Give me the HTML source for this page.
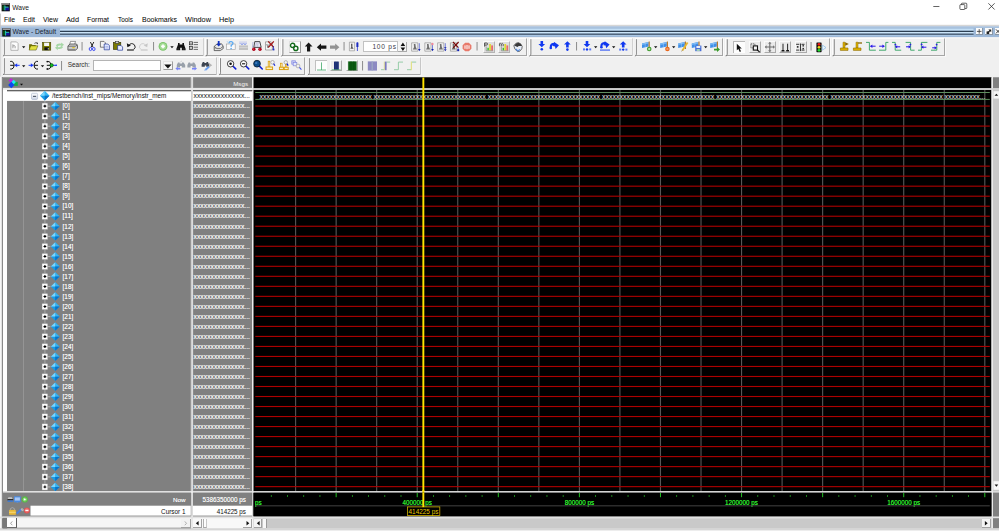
<!DOCTYPE html>
<html><head><meta charset="utf-8"><title>Wave</title>
<style>
html,body{margin:0;padding:0;background:#fff;}
body{width:999px;height:531px;position:relative;overflow:hidden;font-family:"Liberation Sans",sans-serif;}
#r{position:absolute;left:0;top:0;width:999px;height:531px;overflow:hidden;}
#r div,#r span,#r svg{position:absolute;}
#r span{white-space:nowrap;line-height:12px;}
#r span.s{text-shadow:0 0 0.4px currentColor;}
#r span.m{font-family:"Liberation Mono",monospace;}
#r svg{overflow:visible;}
</style></head><body><div id="r">
<div style="left:0px;top:0px;width:999px;height:531px;background:#fff;"></div>
<svg style="left:1px;top:3px;" width="10" height="10"><g transform="translate(0.600,0.000)"><rect x="0" y="0" width="8.200" height="8.300" fill="#0c0c0c"/><rect x="0.400" y="0.300" width="7.400" height="1.300" fill="#c4c4c4"/><rect x="0.900" y="2.400" width="2" height="4.800" fill="#0a5a1a"/><rect x="3.600" y="4.400" width="3.800" height="3" fill="#14149a"/><path d="M3.300 2.400v5M3.300 4.100h3.600" stroke="#2ce0d0" stroke-width="0.900" fill="none"/></g></svg>
<span style="left:12.30px;top:1.60px;font-size:6.67px;color:#1a1a1a;">Wave</span>
<svg style="left:930px;top:0px;" width="70" height="15"><path d="M3.300 6.500h6.100" stroke="#222" stroke-width="0.700"/><rect x="29.900" y="4.600" width="4.900" height="4.900" rx="0.800" fill="none" stroke="#222" stroke-width="0.700"/><path d="M31.400 4.600v-0.600q0-0.800 0.800-0.800h3.800q0.800 0 0.800 0.800v3.800q0 0.800-0.800 0.800h-1.200" fill="none" stroke="#222" stroke-width="0.700"/><path d="M58.400 3.300l6.200 6.200M64.600 3.300l-6.200 6.200" stroke="#222" stroke-width="0.750"/></svg>
<span style="left:4.00px;top:13.60px;font-size:6.83px;color:#000;">File</span>
<span style="left:23.00px;top:13.60px;font-size:6.96px;color:#000;">Edit</span>
<span style="left:43.00px;top:13.60px;font-size:6.98px;color:#000;">View</span>
<span style="left:66.00px;top:13.60px;font-size:7.31px;color:#000;">Add</span>
<span style="left:87.00px;top:13.60px;font-size:6.95px;color:#000;">Format</span>
<span style="left:118.00px;top:13.60px;font-size:6.43px;color:#000;">Tools</span>
<span style="left:142.00px;top:13.60px;font-size:7.00px;color:#000;">Bookmarks</span>
<span style="left:185.00px;top:13.60px;font-size:7.31px;color:#000;">Window</span>
<span style="left:219.00px;top:13.60px;font-size:7.29px;color:#000;">Help</span>
<svg style="left:0px;top:24px" width="999" height="3"><rect x="0.000" y="0.800" width="999.000" height="1.800" fill="#d6d6d6"/></svg>
<svg style="left:0px;top:26px" width="999" height="12"><rect x="0.000" y="0.500" width="999.000" height="11.000" fill="#9db8d8"/></svg>
<svg style="left:0px;top:26px" width="999" height="2"><rect x="0.000" y="0.500" width="999.000" height="1.200" fill="#adc6e2"/></svg>
<svg style="left:0px;top:13px" width="1" height="519"><rect x="0.000" y="0.500" width="0.800" height="518.000" fill="#c4c4c4"/></svg>
<svg style="left:60px;top:26px;" width="915" height="12"><rect x="0" y="2.6" width="913.500" height="2.2" fill="#c4dff5"/><rect x="0" y="4.8" width="913.500" height="1.15" fill="#1e3044"/><rect x="0" y="5.95" width="913.500" height="1.7" fill="#cbe4f8"/><rect x="0" y="7.65" width="913.500" height="1.15" fill="#1e3044"/><rect x="0" y="8.8" width="913.500" height="0.7" fill="#b8d4ee"/></svg>
<svg style="left:2px;top:28px;" width="10" height="10"><g transform="translate(0.300,0.200)"><rect x="0" y="0" width="8.200" height="8.300" fill="#0c0c0c"/><rect x="0.400" y="0.300" width="7.400" height="1.300" fill="#c4c4c4"/><rect x="0.900" y="2.400" width="2" height="4.800" fill="#0a5a1a"/><rect x="3.600" y="4.400" width="3.800" height="3" fill="#14149a"/><path d="M3.300 2.400v5M3.300 4.100h3.600" stroke="#2ce0d0" stroke-width="0.900" fill="none"/></g></svg>
<span style="left:12.50px;top:26.20px;font-size:6.62px;color:#15202e;">Wave - Default</span>
<div style="left:975.8px;top:27.8px;width:7.4px;height:7.6px;background:#fbfbfb;border-right:0.8px solid #8a98a8;border-bottom:0.8px solid #8a98a8;box-sizing:border-box"></div>
<div style="left:985.4px;top:27.8px;width:7.4px;height:7.6px;background:#fbfbfb;border-right:0.8px solid #8a98a8;border-bottom:0.8px solid #8a98a8;box-sizing:border-box"></div>
<div style="left:994.8px;top:27.8px;width:7.4px;height:7.6px;background:#fbfbfb;border-right:0.8px solid #8a98a8;border-bottom:0.8px solid #8a98a8;box-sizing:border-box"></div>
<svg style="left:975px;top:27px;" width="25" height="9"><g transform="translate(0.800,0.800)"><path d="M3.400 1.300v4.600M1.100 3.600h4.600" stroke="#333" stroke-width="0.800"/><path d="M11.400 5.600l3.200-3.200" stroke="#222" stroke-width="1.200"/><path d="M12.600 1.600h2.800v2.800z" fill="#222"/><rect x="10.800" y="3.600" width="2.600" height="2.600" fill="#222"/><path d="M20.200 1.600l4 4M24.200 1.600l-4 4" stroke="#222" stroke-width="0.900"/></g></svg>
<svg style="left:0px;top:37px" width="999" height="41"><rect x="0.000" y="0.500" width="999.000" height="40.000" fill="#f0f0f0"/></svg>
<svg style="left:0px;top:37px" width="999" height="2"><rect x="0.000" y="0.500" width="999.000" height="0.800" fill="#fafafa"/></svg>
<svg style="left:0px;top:37px" width="2" height="41"><rect x="0.000" y="0.500" width="1.200" height="40.000" fill="#dadada"/></svg>
<div style="left:2.5px;top:38.2px;width:201.0px;height:18.099999999999994px;box-sizing:border-box;border-right:0.8px solid #a6a6a6;border-bottom:0.8px solid #a6a6a6;border-top:0.6px solid #fcfcfc;border-left:0.6px solid #fcfcfc"></div>
<svg style="left:2px;top:56px" width="203" height="2"><rect x="0.500" y="0.300" width="202.200" height="0.800" fill="#fbfbfb"/></svg>
<svg style="left:203px;top:38px" width="2" height="19"><rect x="0.500" y="0.200" width="0.900" height="18.100" fill="#fbfbfb"/></svg>
<svg style="left:2px;top:38px;" width="5" height="20"><g transform="translate(0.500,0.200)"><path d="M1.9 1v14.9q0 1.4 -1.5 2.2" fill="none" stroke="#6e6e6e" stroke-width="0.8"/></g></svg>
<div style="left:205.4px;top:38.2px;width:73.6px;height:18.099999999999994px;box-sizing:border-box;border-right:0.8px solid #a6a6a6;border-bottom:0.8px solid #a6a6a6;border-top:0.6px solid #fcfcfc;border-left:0.6px solid #fcfcfc"></div>
<svg style="left:205px;top:56px" width="76" height="2"><rect x="0.400" y="0.300" width="74.800" height="0.800" fill="#fbfbfb"/></svg>
<svg style="left:279px;top:38px" width="1" height="19"><rect x="0.000" y="0.200" width="0.900" height="18.100" fill="#fbfbfb"/></svg>
<svg style="left:205px;top:38px;" width="5" height="20"><g transform="translate(0.400,0.200)"><path d="M1.9 1v14.9q0 1.4 -1.5 2.2" fill="none" stroke="#6e6e6e" stroke-width="0.8"/></g></svg>
<div style="left:281px;top:38.2px;width:246px;height:18.099999999999994px;box-sizing:border-box;border-right:0.8px solid #a6a6a6;border-bottom:0.8px solid #a6a6a6;border-top:0.6px solid #fcfcfc;border-left:0.6px solid #fcfcfc"></div>
<svg style="left:281px;top:56px" width="248" height="2"><rect x="0.000" y="0.300" width="247.200" height="0.800" fill="#fbfbfb"/></svg>
<svg style="left:527px;top:38px" width="1" height="19"><rect x="0.000" y="0.200" width="0.900" height="18.100" fill="#fbfbfb"/></svg>
<svg style="left:281px;top:38px;" width="5" height="20"><g transform="translate(0.000,0.200)"><path d="M1.9 1v14.9q0 1.4 -1.5 2.2" fill="none" stroke="#6e6e6e" stroke-width="0.8"/></g></svg>
<div style="left:529px;top:38.2px;width:103.5px;height:18.099999999999994px;box-sizing:border-box;border-right:0.8px solid #a6a6a6;border-bottom:0.8px solid #a6a6a6;border-top:0.6px solid #fcfcfc;border-left:0.6px solid #fcfcfc"></div>
<svg style="left:529px;top:56px" width="105" height="2"><rect x="0.000" y="0.300" width="104.700" height="0.800" fill="#fbfbfb"/></svg>
<svg style="left:632px;top:38px" width="2" height="19"><rect x="0.500" y="0.200" width="0.900" height="18.100" fill="#fbfbfb"/></svg>
<svg style="left:529px;top:38px;" width="5" height="20"><g transform="translate(0.000,0.200)"><path d="M1.9 1v14.9q0 1.4 -1.5 2.2" fill="none" stroke="#6e6e6e" stroke-width="0.8"/></g></svg>
<div style="left:634.5px;top:38.2px;width:88.5px;height:18.099999999999994px;box-sizing:border-box;border-right:0.8px solid #a6a6a6;border-bottom:0.8px solid #a6a6a6;border-top:0.6px solid #fcfcfc;border-left:0.6px solid #fcfcfc"></div>
<svg style="left:634px;top:56px" width="91" height="2"><rect x="0.500" y="0.300" width="89.700" height="0.800" fill="#fbfbfb"/></svg>
<svg style="left:723px;top:38px" width="1" height="19"><rect x="0.000" y="0.200" width="0.900" height="18.100" fill="#fbfbfb"/></svg>
<svg style="left:634px;top:38px;" width="5" height="20"><g transform="translate(0.500,0.200)"><path d="M1.9 1v14.9q0 1.4 -1.5 2.2" fill="none" stroke="#6e6e6e" stroke-width="0.8"/></g></svg>
<div style="left:725.4px;top:38.2px;width:104.60000000000002px;height:18.099999999999994px;box-sizing:border-box;border-right:0.8px solid #a6a6a6;border-bottom:0.8px solid #a6a6a6;border-top:0.6px solid #fcfcfc;border-left:0.6px solid #fcfcfc"></div>
<svg style="left:725px;top:56px" width="107" height="2"><rect x="0.400" y="0.300" width="105.800" height="0.800" fill="#fbfbfb"/></svg>
<svg style="left:830px;top:38px" width="1" height="19"><rect x="0.000" y="0.200" width="0.900" height="18.100" fill="#fbfbfb"/></svg>
<svg style="left:725px;top:38px;" width="5" height="20"><g transform="translate(0.400,0.200)"><path d="M1.9 1v14.9q0 1.4 -1.5 2.2" fill="none" stroke="#6e6e6e" stroke-width="0.8"/></g></svg>
<div style="left:832.4px;top:38.2px;width:112.60000000000002px;height:18.099999999999994px;box-sizing:border-box;border-right:0.8px solid #a6a6a6;border-bottom:0.8px solid #a6a6a6;border-top:0.6px solid #fcfcfc;border-left:0.6px solid #fcfcfc"></div>
<svg style="left:832px;top:56px" width="115" height="2"><rect x="0.400" y="0.300" width="113.800" height="0.800" fill="#fbfbfb"/></svg>
<svg style="left:945px;top:38px" width="1" height="19"><rect x="0.000" y="0.200" width="0.900" height="18.100" fill="#fbfbfb"/></svg>
<svg style="left:832px;top:38px;" width="5" height="20"><g transform="translate(0.400,0.200)"><path d="M1.9 1v14.9q0 1.4 -1.5 2.2" fill="none" stroke="#6e6e6e" stroke-width="0.8"/></g></svg>
<div style="left:2.5px;top:57.2px;width:214.1px;height:17.799999999999997px;box-sizing:border-box;border-right:0.8px solid #a6a6a6;border-bottom:0.8px solid #a6a6a6;border-top:0.6px solid #fcfcfc;border-left:0.6px solid #fcfcfc"></div>
<svg style="left:2px;top:75px" width="216" height="1"><rect x="0.500" y="0.000" width="215.300" height="0.800" fill="#fbfbfb"/></svg>
<svg style="left:216px;top:57px" width="2" height="18"><rect x="0.600" y="0.200" width="0.900" height="17.800" fill="#fbfbfb"/></svg>
<svg style="left:2px;top:57px;" width="5" height="19"><g transform="translate(0.500,0.200)"><path d="M1.9 1v14.6q0 1.4 -1.5 2.2" fill="none" stroke="#6e6e6e" stroke-width="0.8"/></g></svg>
<div style="left:218.6px;top:57.2px;width:86.9px;height:17.799999999999997px;box-sizing:border-box;border-right:0.8px solid #a6a6a6;border-bottom:0.8px solid #a6a6a6;border-top:0.6px solid #fcfcfc;border-left:0.6px solid #fcfcfc"></div>
<svg style="left:218px;top:75px" width="89" height="1"><rect x="0.600" y="0.000" width="88.100" height="0.800" fill="#fbfbfb"/></svg>
<svg style="left:305px;top:57px" width="2" height="18"><rect x="0.500" y="0.200" width="0.900" height="17.800" fill="#fbfbfb"/></svg>
<svg style="left:218px;top:57px;" width="5" height="19"><g transform="translate(0.600,0.200)"><path d="M1.9 1v14.6q0 1.4 -1.5 2.2" fill="none" stroke="#6e6e6e" stroke-width="0.8"/></g></svg>
<div style="left:307.5px;top:57.2px;width:113.10000000000002px;height:17.799999999999997px;box-sizing:border-box;border-right:0.8px solid #a6a6a6;border-bottom:0.8px solid #a6a6a6;border-top:0.6px solid #fcfcfc;border-left:0.6px solid #fcfcfc"></div>
<svg style="left:307px;top:75px" width="115" height="1"><rect x="0.500" y="0.000" width="114.300" height="0.800" fill="#fbfbfb"/></svg>
<svg style="left:420px;top:57px" width="2" height="18"><rect x="0.600" y="0.200" width="0.900" height="17.800" fill="#fbfbfb"/></svg>
<svg style="left:307px;top:57px;" width="5" height="19"><g transform="translate(0.500,0.200)"><path d="M1.9 1v14.6q0 1.4 -1.5 2.2" fill="none" stroke="#6e6e6e" stroke-width="0.8"/></g></svg>
<svg style="left:81px;top:42px" width="2" height="9"><rect x="0.550" y="0.000" width="1.000" height="8.500" fill="#8c8c8c"/></svg>
<svg style="left:153px;top:42px" width="2" height="9"><rect x="0.050" y="0.000" width="1.000" height="8.500" fill="#8c8c8c"/></svg>
<svg style="left:343px;top:42px" width="2" height="9"><rect x="0.550" y="0.000" width="1.000" height="8.500" fill="#8c8c8c"/></svg>
<svg style="left:476px;top:42px" width="2" height="9"><rect x="0.550" y="0.000" width="1.000" height="8.500" fill="#8c8c8c"/></svg>
<svg style="left:576px;top:42px" width="2" height="9"><rect x="0.050" y="0.000" width="1.000" height="8.500" fill="#8c8c8c"/></svg>
<svg style="left:810px;top:42px" width="2" height="9"><rect x="0.550" y="0.000" width="1.000" height="8.500" fill="#8c8c8c"/></svg>
<svg style="left:61px;top:61px" width="2" height="10"><rect x="0.050" y="0.000" width="1.000" height="9.500" fill="#8c8c8c"/></svg>
<svg style="left:362px;top:61px" width="2" height="10"><rect x="0.050" y="0.000" width="1.000" height="9.500" fill="#8c8c8c"/></svg>
<svg style="left:22px;top:46px;" width="5" height="3"><g transform="translate(0.000,0.200)"><path d="M0 0h3.4L1.7 2z" fill="#111"/></g></svg>
<svg style="left:170px;top:46px;" width="5" height="3"><g transform="translate(0.300,0.200)"><path d="M0 0h3.4L1.7 2z" fill="#111"/></g></svg>
<svg style="left:594px;top:46px;" width="5" height="3"><g transform="translate(0.000,0.200)"><path d="M0 0h3.4L1.7 2z" fill="#111"/></g></svg>
<svg style="left:612px;top:46px;" width="5" height="3"><g transform="translate(0.000,0.200)"><path d="M0 0h3.4L1.7 2z" fill="#111"/></g></svg>
<svg style="left:654px;top:46px;" width="5" height="3"><g transform="translate(0.000,0.200)"><path d="M0 0h3.4L1.7 2z" fill="#111"/></g></svg>
<svg style="left:672px;top:46px;" width="5" height="3"><g transform="translate(0.000,0.200)"><path d="M0 0h3.4L1.7 2z" fill="#111"/></g></svg>
<svg style="left:704px;top:46px;" width="5" height="3"><g transform="translate(0.000,0.200)"><path d="M0 0h3.4L1.7 2z" fill="#111"/></g></svg>
<svg style="left:22px;top:65px;" width="5" height="3"><g transform="translate(0.000,0.200)"><path d="M0 0h3.4L1.7 2z" fill="#111"/></g></svg>
<svg style="left:40px;top:65px;" width="5" height="3"><g transform="translate(0.800,0.200)"><path d="M0 0h3.4L1.7 2z" fill="#111"/></g></svg>
<svg style="left:10px;top:41px;" width="13" height="13"><g transform="translate(0.500,0.500)"><path d="M0.4 0.4h5.6l1.6 1.6v6.8h-7.2z" fill="#fdfdfd" stroke="#9a9a9a" stroke-width="0.7"/><path d="M2.4 6.8v-4M2.4 4.6q1.6-1.2 2.2 0v2.2" fill="none" stroke="#8a8a8a" stroke-width="0.8"/></g></svg>
<svg style="left:28px;top:42px;" width="13" height="13"><g transform="translate(0.800,0.000)"><path d="M0.3 8V2.2h2.6l0.8 0.9h3.2V8z" fill="#6a6a00"/><path d="M0.3 8.1l1.6-4.3h7.2L7.3 8.1z" fill="#e0e040" stroke="#4a4a00" stroke-width="0.5"/><path d="M5.6 1.4q1.6-1.4 3 0" fill="none" stroke="#222" stroke-width="0.7"/><path d="M7.7 0.6l1.4 0.2-0.4 1.6z" fill="#111"/></g></svg>
<svg style="left:42px;top:42px;" width="13" height="13"><g transform="translate(0.200,0.100)"><rect x="0.2" y="0.2" width="8.4" height="7.9" fill="#7a7a00" stroke="#3c3c00" stroke-width="0.5"/><rect x="1.9" y="0.6" width="5" height="3.3" fill="#f4f4f4"/><rect x="2.2" y="5.2" width="4.6" height="2.8" fill="#111"/><rect x="5.6" y="5.9" width="0.9" height="1.6" fill="#ddd"/></g></svg>
<svg style="left:54px;top:42px;" width="13" height="13"><g transform="translate(0.800,0.000)"><path d="M1 3.6q1.4-2.6 5.4-1.8V0.4l2.8 2.4-2.8 2.2V3.6q-2.6-0.6-3.6 0.9z" fill="#a6d6a6"/><path d="M8.4 5q-1.4 2.6-5.4 1.8v1.4L0.2 5.8 3 3.6v1.4q2.6 0.6 3.6-0.9z" fill="#a6d6a6"/></g></svg>
<svg style="left:67px;top:41px;" width="13" height="13"><g transform="translate(0.500,0.000)"><path d="M3 0.4h5l-1 3.4H2z" fill="#fff" stroke="#555" stroke-width="0.6"/><path d="M0.4 5l2-2h6.6l1 1.6v2.8l-2 1.8H0.4z" fill="#cfcfcf" stroke="#333" stroke-width="0.7"/><path d="M0.6 5.2h7.4l1.8-1.2" fill="none" stroke="#333" stroke-width="0.6"/><rect x="4.8" y="6.2" width="2.4" height="1" fill="#e0c000"/><path d="M1 8.4h7" stroke="#666" stroke-width="0.6"/></g></svg>
<svg style="left:88px;top:41px;" width="13" height="13"><g transform="translate(0.800,0.800)"><path d="M1.6 0.2l2.6 5.2M5 0.2L2.4 5.4" stroke="#111" stroke-width="0.9" fill="none"/><ellipse cx="1.7" cy="7.2" rx="1.3" ry="1.6" fill="none" stroke="#3040f0" stroke-width="0.9"/><ellipse cx="5" cy="7.2" rx="1.3" ry="1.6" fill="none" stroke="#3040f0" stroke-width="0.9"/></g></svg>
<svg style="left:100px;top:41px;" width="13" height="13"><path d="M0.4 0.4h3.6l1.4 1.4v4.4h-5z" fill="#f4f4f4" stroke="#333" stroke-width="0.6"/><path d="M4.2 3h3.6l1.6 1.6v4.2H4.2z" fill="#dfe6ff" stroke="#223a9a" stroke-width="0.7"/><path d="M5.4 5.6h2.6M5.4 7h2.6" stroke="#7a8ad0" stroke-width="0.5"/></svg>
<svg style="left:113px;top:41px;" width="13" height="13"><rect x="0.4" y="1.4" width="7.4" height="7" fill="#7a7a00" stroke="#2c2c00" stroke-width="0.6"/><rect x="2.4" y="0.4" width="3.4" height="2" fill="#d0d0d0" stroke="#222" stroke-width="0.5"/><path d="M4.6 4.4h3.4l1.6 1.6v3.2h-5z" fill="#e8ecff" stroke="#223a9a" stroke-width="0.7"/></svg>
<svg style="left:126px;top:42px;" width="13" height="13"><g transform="translate(0.400,0.000)"><path d="M2.2 3.6q2.6-3.6 5.8-0.8q2 2.6-0.6 4.6" fill="none" stroke="#111" stroke-width="0.9"/><path d="M0.4 1.2l0.6 4 3.4-1.8z" fill="#111"/><path d="M0.6 8h6.8" stroke="#111" stroke-width="1.1"/></g></svg>
<svg style="left:139px;top:42px;" width="13" height="13"><path d="M7 3.6q-2.6-3.6-5.8-0.8q-2 2.6 0.6 4.6" fill="none" stroke="#c6c6c6" stroke-width="0.8"/><path d="M8.8 1.2l-0.6 4-3.4-1.8z" fill="#c6c6c6"/><path d="M1.8 8h6.8" stroke="#bdbdbd" stroke-width="1"/></svg>
<svg style="left:158px;top:41px;" width="13" height="13"><g transform="translate(0.400,0.900)"><circle cx="4.6" cy="4.5" r="4.4" fill="#7cc46c"/><circle cx="4.6" cy="4.5" r="3.3" fill="#a4dc94"/><path d="M4.6 2.6v3.8M2.7 4.5h3.8" stroke="#fff" stroke-width="1.7"/></g></svg>
<svg style="left:176px;top:41px;" width="13" height="13"><g transform="translate(0.000,0.800)"><path d="M2 1.2h1.6v1.4h2.8V1.2H8v1.6l1.6 4.2v1.4H5.8V6h-1.6v2.4H0.4V7L2 2.8z" fill="#111"/><path d="M1.4 7.2h1.6M7 7.2h1.6" stroke="#555" stroke-width="0.6"/></g></svg>
<svg style="left:189px;top:41px;" width="13" height="13"><g transform="translate(0.000,0.200)"><rect x="0.5" y="0.6" width="3" height="3" fill="#eee" stroke="#222" stroke-width="0.7"/><rect x="0.5" y="5.4" width="3" height="3" fill="#eee" stroke="#222" stroke-width="0.7"/><path d="M1.3 2.1h1.4M1.3 6.9h1.4" stroke="#222" stroke-width="0.6"/><path d="M4.6 1.2h4.4M4.6 3.4h4.4M4.6 6h4.4M4.6 8.2h4.4" stroke="#333" stroke-width="0.7"/></g></svg>
<svg style="left:213px;top:40px;" width="13" height="13"><g transform="translate(0.800,0.800)"><path d="M0.4 5.6l3-2.6h4.4l1.6 2.4v2.4l-3 2H0.4z" fill="#e6e6e6" stroke="#333" stroke-width="0.7"/><path d="M0.6 5.8l2.6 2h3.4l2.6-2.2" fill="none" stroke="#333" stroke-width="0.6"/><path d="M0.6 7.6h5.6" stroke="#777" stroke-width="0.5"/><path d="M4 0.2h1.8v3h1.4L4.9 5.8 2.6 3.2H4z" fill="#1030c0"/></g></svg>
<svg style="left:226px;top:41px;" width="13" height="13"><rect x="0.6" y="3" width="8.6" height="5.6" fill="#fafafa" stroke="#9a9a9a" stroke-width="0.6"/><path d="M2.8 2.4q0.4-2 2.4-1.8q2.2 0.4 1.6 2.2q-0.4 1-1.6 1.6v1.4" fill="none" stroke="#58a8f0" stroke-width="1.3"/><circle cx="5.1" cy="7.6" r="0.8" fill="#58a8f0"/><path d="M0.8 0.6l1.2 0.6M2.8 0.2l0.8 0.6" stroke="#6ab0f0" stroke-width="0.5"/></svg>
<svg style="left:238px;top:41px;" width="13" height="13"><g transform="translate(0.800,0.000)"><rect x="0.2" y="4.4" width="9" height="4.6" fill="#c2c2c2"/><path d="M0.4 6.4h8.6" stroke="#e4e4e4" stroke-width="0.6"/><path d="M1.2 0.6v3M3.2 0.6v3M5.2 0.6v3M7.2 0.6v3" stroke="#8090e8" stroke-width="0.8" stroke-dasharray="1 0.6"/><path d="M2.2 2.6l1 1.2 1-1.2M5.2 2.6l1 1.2 1-1.2" stroke="#4060e0" stroke-width="0.6" fill="none"/></g></svg>
<svg style="left:251px;top:41px;" width="13" height="13"><g transform="translate(0.800,0.000)"><path d="M3 0.6h5l1.4 5.8H2z" fill="#e8e8f4" stroke="#222" stroke-width="0.8"/><path d="M1.2 1l-0.6 6" stroke="#9aa0d0" stroke-width="0.7"/><path d="M4.6 1.6l-0.8 4.2M6.2 1.6l-0.4 4.2" stroke="#a8a8c8" stroke-width="0.6"/><circle cx="2" cy="8.2" r="1.7" fill="#b00018"/><circle cx="8.2" cy="8.2" r="1.7" fill="#b00018"/><circle cx="1.7" cy="7.9" r="0.5" fill="#f06070"/><circle cx="7.9" cy="7.9" r="0.5" fill="#f06070"/></g></svg>
<svg style="left:265px;top:41px;" width="13" height="13"><path d="M0.5 0.8h5.6l1.2 1.2v7H0.5z" fill="#f4f4f4" stroke="#777" stroke-width="0.6"/><path d="M1.8 3l1.2 4 1.4-4" stroke="#666" stroke-width="0.8" fill="none"/><path d="M3.2 0.4l5.6 6M8.8 0.4L3.4 6.4" stroke="#a01010" stroke-width="1.2"/><path d="M8.4 5v3.6" stroke="#2030c0" stroke-width="0.8"/><rect x="7.6" y="7.6" width="1.8" height="1.8" fill="#2030c0"/></svg>
<div style="left:288.8px;top:41.2px;width:12px;height:11.6px;background:#fcfcfc;box-sizing:border-box;border-right:1px solid #9a9a9a;border-bottom:1px solid #9a9a9a;border-top:0.5px solid #e0e0e0;border-left:0.5px solid #e0e0e0"></div>
<svg style="left:289px;top:42px;" width="13" height="13"><g transform="translate(0.600,0.400)"><circle cx="3" cy="3" r="2.1" fill="none" stroke="#146a1c" stroke-width="1.4"/><circle cx="6.2" cy="6" r="2.1" fill="none" stroke="#146a1c" stroke-width="1.4"/></g></svg>
<svg style="left:304px;top:42px;" width="13" height="13"><g transform="translate(0.800,0.400)"><path d="M3.8 0L7.7 4.2H5.4V9.2H2.2V4.2H0z" fill="#161616"/></g></svg>
<svg style="left:316px;top:43px;" width="13" height="13"><g transform="translate(0.800,0.600)"><path d="M0 3.6L4.2 0v2h5.4v3.2H4.2v2z" fill="#161616"/></g></svg>
<svg style="left:330px;top:43px;" width="13" height="13"><g transform="translate(0.000,0.600)"><path d="M9.4 3.6L5.2 0v2H0v3.2h5.2v2z" fill="#929292"/></g></svg>
<svg style="left:349px;top:41px;" width="13" height="13"><g transform="translate(0.000,0.600)"><path d="M0.4 0.6h5.2v8.6H0.4z" fill="#f2f2f2" stroke="#8a8a8a" stroke-width="0.6"/><path d="M2 2.2h1.4v3.2l1.2 1.8H1.4l0.8-1.8z" fill="#555"/><path d="M8.400 0.600v8.800" stroke="#2030d0" stroke-width="0.800"/><path d="M7.400 1h2v4.400h-2z" fill="#1c2cc0"/></g></svg>
<div style="left:363.4px;top:41.4px;width:34.2px;height:10.8px;background:#fff;box-sizing:border-box;border:0.6px solid #c2c2c2"></div>
<span style="left:372.400px;top:40.900px;font-size:6.600px;letter-spacing:0.780px;color:#3a3a48">100 ps</span>
<div style="left:398.4px;top:41.8px;width:8.6px;height:10.6px;background:#f6f6f6;box-sizing:border-box;border-right:0.9px solid #aaa;border-bottom:0.9px solid #aaa"></div>
<svg style="left:398px;top:41px;" width="10" height="12"><g transform="translate(0.400,0.800)"><path d="M2.200 4.200h4.600L4.500 0.800zM2.200 5.800h4.600L4.500 9.200z" fill="#111"/><path d="M1.400 5h6.200" stroke="#ccc" stroke-width="0.400"/></g></svg>
<svg style="left:411px;top:42px;" width="13" height="13"><g transform="translate(0.200,0.400)"><path d="M0.4 0.4h6.2v8.4H0.4z" fill="#f0f0f0" stroke="#8a8a8a" stroke-width="0.6"/><path d="M2.6 1.6h1.6l0.4 3 1.2 2.4H1.6l1.2-2.2z" fill="#6e6e6e"/><path d="M8.1 0.8v6.4" stroke="#4050d0" stroke-width="0.7"/><path d="M6.8 6.6h2.6L8.1 8.9z" fill="#1020b0"/></g></svg>
<svg style="left:424px;top:42px;" width="13" height="13"><g transform="translate(0.400,0.400)"><path d="M0.4 0.4h6.2v8.4H0.4z" fill="#f0f0f0" stroke="#8a8a8a" stroke-width="0.6"/><path d="M2.6 1.6h1.6l0.4 3 1.2 2.4H1.6l1.2-2.2z" fill="#6e6e6e"/><path d="M8.1 2.6v4.4" stroke="#4050d0" stroke-width="0.7"/><path d="M6.8 6.6h2.6L8.1 8.9z" fill="#1020b0"/><circle cx="8" cy="1.6" r="1.2" fill="#f08a9a"/></g></svg>
<svg style="left:437px;top:42px;" width="13" height="13"><g transform="translate(0.200,0.400)"><path d="M0.4 0.4h6.2v8.4H0.4z" fill="#f0f0f0" stroke="#8a8a8a" stroke-width="0.6"/><path d="M2.6 1.6h1.6l0.4 3 1.2 2.4H1.6l1.2-2.2z" fill="#6e6e6e"/><path d="M8.1 0.8v5" stroke="#4050d0" stroke-width="0.7"/><path d="M6.8 4.8h2.6L8.1 6.6zM6.8 6.8h2.6L8.1 8.9z" fill="#1020b0"/></g></svg>
<svg style="left:450px;top:42px;" width="13" height="13"><g transform="translate(0.000,0.400)"><path d="M0.4 0.4h6.2v8.4H0.4z" fill="#f0f0f0" stroke="#8a8a8a" stroke-width="0.6"/><path d="M2.6 1.6h1.6l0.4 3 1.2 2.4H1.6l1.2-2.2z" fill="#6e6e6e"/><path d="M3 -0.4l5.4 5.6M8.6 -0.4L3.2 5.4" stroke="#7a0a0a" stroke-width="1.2"/><path d="M8.2 5v2.4" stroke="#4050d0" stroke-width="0.7"/><rect x="7.2" y="6.8" width="2" height="2" fill="#1020b0"/></g></svg>
<svg style="left:462px;top:42px;" width="13" height="13"><g transform="translate(0.600,0.800)"><path d="M2.6 0h3.6l2.6 2.5v3.4L6.2 8.4H2.6L0 5.9V2.5z" fill="#e8796a"/><path d="M2.4 2.6v3.4M4.4 2.2v4.2M6.4 2.6v3.4" stroke="#fff" stroke-width="1"/></g></svg>
<div style="left:482.6px;top:41.2px;width:12px;height:11.8px;background:#dedede;box-sizing:border-box;border-right:1.2px solid #b4b4b4;border-bottom:1.2px solid #b4b4b4;border-top:0.5px solid #fafafa;border-left:0.5px solid #fafafa"></div>
<svg style="left:482px;top:41px;" width="13" height="13"><g transform="translate(0.600,0.200)"><path d="M2 5.4V1.8h1.8q1.4 0.2 1.2 1.2q-0.2 0.9-1.4 0.9H2" fill="none" stroke="#444" stroke-width="0.9"/><rect x="4.8" y="6.6" width="1.4" height="2.6" fill="#30c030"/><rect x="6.6" y="2.8" width="1.7" height="6.6" fill="#e0d830"/><rect x="8.6" y="4.2" width="1.8" height="5.2" fill="#e86a6a"/><path d="M3.6 5.2v4.4h7" stroke="#7a7a7a" stroke-width="0.6" fill="none"/></g></svg>
<div style="left:497.8px;top:41.2px;width:12px;height:11.8px;background:#dedede;box-sizing:border-box;border-right:1.2px solid #b4b4b4;border-bottom:1.2px solid #b4b4b4;border-top:0.5px solid #fafafa;border-left:0.5px solid #fafafa"></div>
<svg style="left:497px;top:41px;" width="13" height="13"><g transform="translate(0.800,0.200)"><path d="M1.6 5V2.2M1.6 2.9q1.4-1.4 1.9 0V5M3.5 2.9q1.4-1.4 1.9 0V5" fill="none" stroke="#444" stroke-width="0.8"/><rect x="4.8" y="6.6" width="1.4" height="2.6" fill="#30c030"/><rect x="6.6" y="2.8" width="1.7" height="6.6" fill="#e0d830"/><rect x="8.6" y="4.2" width="1.8" height="5.2" fill="#e86a6a"/><path d="M3.6 5.2v4.4h7" stroke="#7a7a7a" stroke-width="0.6" fill="none"/></g></svg>
<svg style="left:512px;top:42px;" width="13" height="13"><g transform="translate(0.800,0.400)"><path d="M1 3.4l2-2.4 2.4-0.8 2.4 1.2 1.6 2.6-0.4 2.4-2 2.4-2.2 0.4-2.6-2.4z" fill="#e8eef8" stroke="#333" stroke-width="0.7"/><path d="M1.4 3.2l2-2.2 2.2-0.6 2.2 1 1.4 2.2H6l-1.4 1z" fill="#3a3a3a"/><path d="M3 6.6l2 2 2.2-1.4" stroke="#5a90e0" stroke-width="1.2" fill="none"/></g></svg>
<svg style="left:538px;top:41px;" width="13" height="13"><g transform="translate(0.400,0.000)"><path d="M2.1 0h2.6v3h2L3.4 6.2 0 3h2.1z" fill="#1038f0"/><circle cx="3.4" cy="8.3" r="1.3" fill="#1038f0"/></g></svg>
<svg style="left:549px;top:42px;" width="13" height="13"><g transform="translate(0.000,0.200)"><path d="M1.800 5.200q-0.200-3.800 4-3.600" fill="none" stroke="#1038f0" stroke-width="2.200"/><path d="M5.200 -0.200l4.800 3.200-3.400 3.800-0.600-2.600-2.200-0.400z" fill="#1038f0"/><circle cx="1.800" cy="5.800" r="1.300" fill="#1038f0"/></g></svg>
<svg style="left:564px;top:41px;" width="13" height="13"><g transform="translate(0.000,0.200)"><path d="M2.1 6.2h2.6v-3h2L3.4 0 0 3.2h2.1z" fill="#1038f0"/><circle cx="3.4" cy="8.4" r="1.3" fill="#1038f0"/></g></svg>
<svg style="left:582px;top:41px;" width="13" height="13"><g transform="translate(0.600,0.000)"><path d="M3.1 0h2.6v3h2L4.4 6.2 1 3h2.1z" fill="#1038f0"/><circle cx="4.4" cy="8.4" r="1.2" fill="#1038f0"/><rect x="0.4" y="7.4" width="2" height="2" fill="#5a78f4"/><rect x="6.6" y="7.4" width="2" height="2" fill="#5a78f4"/></g></svg>
<svg style="left:599px;top:41px;" width="13" height="13"><g transform="translate(0.400,0.400)"><path d="M2 5.200q-0.200-3.800 4-3.600" fill="none" stroke="#1038f0" stroke-width="2.200"/><path d="M5.400 -0.200l4.800 3.200-3.400 3.800-0.600-2.600-2.200-0.400z" fill="#1038f0"/><circle cx="2" cy="5.800" r="1.300" fill="#1038f0"/><rect x="0.600" y="8" width="10" height="1.400" fill="#5a78f4"/></g></svg>
<svg style="left:618px;top:41px;" width="13" height="13"><g transform="translate(0.600,0.200)"><path d="M3.3 6.2h2.6v-3h2L4.6 0 1.2 3.2h2.1z" fill="#1038f0"/><circle cx="4.6" cy="8.4" r="1.2" fill="#1038f0"/><rect x="0.6" y="7.4" width="2" height="2" fill="#5a78f4"/><rect x="6.8" y="7.4" width="2" height="2" fill="#5a78f4"/></g></svg>
<svg style="left:641px;top:41px;" width="13" height="13"><g transform="translate(0.800,0.200)"><path d="M0.2 2.2l6.6-1.4v4.4L0.2 6.8z" fill="#3f8fe8"/><path d="M0.2 2.2l6.6-1.4v1.4L0.2 3.8z" fill="#7ab8f4"/><path d="M3.4 1.4v4.8" stroke="#a8d0f8" stroke-width="0.5"/><path d="M7.4 0.2v7.6" stroke="#b87a30" stroke-width="1.2"/><circle cx="7.4" cy="7.8" r="2.3" fill="#3e9a2c"/><path d="M7.4 6.6v2.4M6.2 7.8h2.4" stroke="#e8ffe0" stroke-width="0.8"/></g></svg>
<svg style="left:660px;top:41px;" width="13" height="13"><g transform="translate(0.000,0.200)"><path d="M0.2 2.2l6.6-1.4v4.4L0.2 6.8z" fill="#3f8fe8"/><path d="M0.2 2.2l6.6-1.4v1.4L0.2 3.8z" fill="#7ab8f4"/><path d="M3.4 1.4v4.8" stroke="#a8d0f8" stroke-width="0.5"/><path d="M7.4 0.2v7.6" stroke="#b87a30" stroke-width="1.2"/><circle cx="7.4" cy="7.8" r="2.3" fill="#e8661c"/><path d="M6.4 7.8h2" stroke="#ffe8d8" stroke-width="0.8"/></g></svg>
<svg style="left:678px;top:41px;" width="13" height="13"><g transform="translate(0.000,0.200)"><path d="M0.2 2.2l6.6-1.4v4.4L0.2 6.8z" fill="#3f8fe8"/><path d="M0.2 2.2l6.6-1.4v1.4L0.2 3.8z" fill="#7ab8f4"/><path d="M3.4 1.4v4.8" stroke="#a8d0f8" stroke-width="0.5"/><path d="M7.4 0.2v7.6" stroke="#b87a30" stroke-width="1.2"/><path d="M9.6 1.2L4.4 9.2" stroke="#e8b830" stroke-width="1.8"/><path d="M4.4 9.2l-0.8 0.6" stroke="#7a5a20" stroke-width="1"/></g></svg>
<svg style="left:691px;top:41px;" width="13" height="13"><g transform="translate(0.600,0.200)"><path d="M0.2 2.2l6.6-1.4v4.4L0.2 6.8z" fill="#3f8fe8"/><path d="M0.2 2.2l6.6-1.4v1.4L0.2 3.8z" fill="#7ab8f4"/><path d="M3.4 1.4v4.8" stroke="#a8d0f8" stroke-width="0.5"/><path d="M7.4 0.2v7.6" stroke="#b87a30" stroke-width="1.2"/><rect x="3.6" y="4.4" width="6.2" height="5.6" fill="#4a70d8"/><rect x="4.8" y="4.8" width="3.8" height="2" fill="#e8eefc"/><rect x="5" y="8" width="3.2" height="1.6" fill="#b8e8b0"/></g></svg>
<svg style="left:710px;top:41px;" width="13" height="13"><g transform="translate(0.000,0.200)"><path d="M0.2 2.2l6.6-1.4v4.4L0.2 6.8z" fill="#3f8fe8"/><path d="M0.2 2.2l6.6-1.4v1.4L0.2 3.8z" fill="#7ab8f4"/><path d="M3.4 1.4v4.8" stroke="#a8d0f8" stroke-width="0.5"/><path d="M7.4 0.2v7.6" stroke="#b87a30" stroke-width="1.2"/><path d="M4 7.6h3V5.8l3 2.6-3 2.4V9.2H4z" fill="#3a9a2c"/></g></svg>
<div style="left:733.2px;top:41.1px;width:12px;height:12px;background:#fdfdfd;box-sizing:border-box;border-left:0.8px solid #b8b8b8;border-top:0.8px solid #b8b8b8"></div>
<svg style="left:733px;top:41px;" width="13" height="13"><g transform="translate(0.200,0.100)"><path d="M3.6 2.6v6.6l1.6-1.4 1.4 3 1.2-0.6-1.4-2.8h2.2z" fill="#111"/></g></svg>
<div style="left:748.5px;top:41.1px;width:12px;height:12px;background:#eaeaea;box-sizing:border-box;border-right:1.2px solid #aaaaaa;border-bottom:1.2px solid #aaaaaa;border-top:0.5px solid #fafafa;border-left:0.5px solid #fafafa"></div>
<svg style="left:748px;top:41px;" width="13" height="13"><g transform="translate(0.500,0.100)"><rect x="2.4" y="2.8" width="4" height="4" fill="none" stroke="#333" stroke-width="0.7" stroke-dasharray="1.2 0.7"/><rect x="4.8" y="4.8" width="4.2" height="4.2" fill="#f4f4f4" stroke="#111" stroke-width="1.1"/><path d="M8.6 8.6l2.6 2.4" stroke="#111" stroke-width="1.2"/></g></svg>
<div style="left:764px;top:41.1px;width:12px;height:12px;background:#eaeaea;box-sizing:border-box;border-right:1.2px solid #aaaaaa;border-bottom:1.2px solid #aaaaaa;border-top:0.5px solid #fafafa;border-left:0.5px solid #fafafa"></div>
<svg style="left:764px;top:41px;" width="13" height="13"><g transform="translate(0.000,0.100)"><path d="M5.8 1.4v9M1.4 5.9h8.8" stroke="#6c6c6c" stroke-width="1.100"/><path d="M5.8 0.6l1.7 2H4.1zM5.8 11.2l1.7-2H4.1zM0.6 5.9l2-1.7v3.4zM11 5.9l-2-1.7v3.4z" fill="#7a7a7a"/></g></svg>
<div style="left:779px;top:41.1px;width:12px;height:12px;background:#eaeaea;box-sizing:border-box;border-right:1.2px solid #aaaaaa;border-bottom:1.2px solid #aaaaaa;border-top:0.5px solid #fafafa;border-left:0.5px solid #fafafa"></div>
<svg style="left:779px;top:41px;" width="13" height="13"><g transform="translate(0.000,0.100)"><path d="M4 2.6v6.6M8.6 2.6v6.6" stroke="#111" stroke-width="0.9"/><path d="M2.6 9.6h2.8M7.2 9.6H10" stroke="#111" stroke-width="1.4"/><path d="M1.4 10.6h9.6" stroke="#777" stroke-width="0.5"/></g></svg>
<div style="left:794.5px;top:41.1px;width:12px;height:12px;background:#eaeaea;box-sizing:border-box;border-right:1.2px solid #aaaaaa;border-bottom:1.2px solid #aaaaaa;border-top:0.5px solid #fafafa;border-left:0.5px solid #fafafa"></div>
<svg style="left:794px;top:41px;" width="13" height="13"><g transform="translate(0.500,0.100)"><path d="M1.6 3.2h3.2M1.6 9h3.2M7 3.2h3M7 9h3" stroke="#222" stroke-width="0.9"/><path d="M6 2.4v7.6" stroke="#222" stroke-width="0.9"/><rect x="2.4" y="5" width="1.6" height="1.6" fill="#222"/><rect x="8" y="4" width="1.4" height="1.4" fill="#222"/><rect x="8" y="6.8" width="1.4" height="1.4" fill="#222"/></g></svg>
<svg style="left:816px;top:42px;" width="13" height="13"><g transform="translate(0.400,0.400)"><rect x="0" y="0" width="5.2" height="9.8" rx="0.6" fill="#111"/><circle cx="2.6" cy="1.9" r="1.4" fill="#f01818"/><circle cx="2.6" cy="4.9" r="1.4" fill="#e8d820"/><circle cx="2.6" cy="7.9" r="1.4" fill="#20e030"/><path d="M6 2.6l3.6 2.6L6 7.8z" fill="#e8f4fc" stroke="#88b8e0" stroke-width="0.7"/></g></svg>
<svg style="left:840px;top:41px;" width="13" height="13"><g transform="translate(0.000,0.800)"><path d="M3 0.4h2v6H3z" fill="#e0b400" stroke="#8a6800" stroke-width="0.5"/><path d="M0.4 6.2h7.6v2.4H0.4z" fill="#e0b400" stroke="#8a6800" stroke-width="0.6"/><path d="M5.2 0.4l3.6 1.8-3.6 1.8z" fill="#8a6800"/></g></svg>
<svg style="left:853px;top:41px;" width="13" height="13"><g transform="translate(0.000,0.800)"><path d="M3 0.4h2v6H3z" fill="#e0b400" stroke="#8a6800" stroke-width="0.5"/><path d="M0.4 6.2h7.6v2.4H0.4z" fill="#e0b400" stroke="#8a6800" stroke-width="0.6"/><path d="M5 1.2h4" stroke="#8a6800" stroke-width="1.3"/></g></svg>
<svg style="left:866px;top:41px;" width="13" height="13"><g transform="translate(0.000,0.600)"><path d="M0 0.8h3.4v7.8h6.4" fill="none" stroke="#2fa060" stroke-width="0.9"/><path d="M4.6 4.6h5" stroke="#2a18e8" stroke-width="1"/><path d="M3.9999999999999996 4.6l2.4-1.8v3.6z" fill="#2a18e8"/></g></svg>
<svg style="left:879px;top:41px;" width="13" height="13"><g transform="translate(0.000,0.600)"><path d="M0 8.6h6.8V0.8h2.6" fill="none" stroke="#2fa060" stroke-width="0.9"/><path d="M0.2 4.6h5" stroke="#2a18e8" stroke-width="1"/><path d="M5.8 4.6l-2.4-1.8v3.6z" fill="#2a18e8"/></g></svg>
<svg style="left:892px;top:41px;" width="13" height="13"><g transform="translate(0.000,0.600)"><path d="M0 0.8h3.2v7.8h6" fill="none" stroke="#2fa060" stroke-width="0.9"/><path d="M3.6 5.2h4.6" stroke="#2a18e8" stroke-width="1"/><path d="M3 5.2l2.2-1.6v3.2z" fill="#2a18e8"/><circle cx="3.4" cy="3" r="0.9" fill="#2a18e8"/></g></svg>
<svg style="left:905px;top:41px;" width="13" height="13"><g transform="translate(0.000,0.600)"><path d="M0.6 0.8h5v7.8h4" fill="none" stroke="#2fa060" stroke-width="0.9"/><path d="M1 5.2h4.2" stroke="#2a18e8" stroke-width="1"/><path d="M5.8 5.2l-2.2-1.6v3.2z" fill="#2a18e8"/><circle cx="5.4" cy="3" r="0.9" fill="#2a18e8"/></g></svg>
<svg style="left:918px;top:41px;" width="13" height="13"><g transform="translate(0.000,0.600)"><path d="M0 8.6h3.4V0.8h6" fill="none" stroke="#2fa060" stroke-width="0.9"/><path d="M3.8 5.6h4.6" stroke="#2a18e8" stroke-width="1"/><path d="M3.2 5.6l2.2-1.6v3.2z" fill="#2a18e8"/><circle cx="3.6" cy="2.8" r="0.9" fill="#2a18e8"/></g></svg>
<svg style="left:931px;top:41px;" width="13" height="13"><g transform="translate(0.000,0.600)"><path d="M0 8.6h5.8V0.8h3.6" fill="none" stroke="#2fa060" stroke-width="0.9"/><path d="M1.2 6.2h4" stroke="#2a18e8" stroke-width="1"/><path d="M5.8 6.2l-2.2-1.6v3.2z" fill="#2a18e8"/><circle cx="5.6" cy="3" r="0.9" fill="#2a18e8"/></g></svg>
<svg style="left:10px;top:60px;" width="13" height="13"><g transform="translate(0.000,0.800)"><path d="M0.2 0.6h1.6q2 0.4 2.4 3.8M0.2 4.5h4M0.2 8.2h1.6q2-0.4 2.4-3.6" fill="none" stroke="#111" stroke-width="1"/><path d="M5.4 4.5h4.2" stroke="#1838f8" stroke-width="1"/><path d="M4.4 4.5l2.8-2v4z" fill="#1838f8"/></g></svg>
<svg style="left:28px;top:60px;" width="13" height="13"><g transform="translate(0.400,0.800)"><path d="M9.6 0.6H8q-2 0.4-2.4 3.8M9.6 4.5h-4M9.6 8.2H8q-2-0.4-2.4-3.6" fill="none" stroke="#111" stroke-width="1"/><path d="M0.2 4.5h3.6" stroke="#1838f8" stroke-width="1"/><path d="M5.2 4.5l-2.8-2v4z" fill="#1838f8"/></g></svg>
<svg style="left:46px;top:60px;" width="13" height="13"><g transform="translate(0.600,0.800)"><path d="M0.2 0.8h2.2q1.6 0.4 2 3.4M0.2 4.5h4M0.2 8.2h2.2q1.6-0.4 2-3.4" fill="none" stroke="#111" stroke-width="1"/><rect x="0" y="0.1" width="1.4" height="1.4" fill="#111"/><rect x="0" y="7.5" width="1.4" height="1.4" fill="#111"/><path d="M6 4.5h4" stroke="#1838f8" stroke-width="1"/><circle cx="9.6" cy="4.5" r="0.8" fill="#1838f8"/><circle cx="5" cy="4.5" r="1.7" fill="#10c020" stroke="#0a3a0a" stroke-width="0.6"/></g></svg>
<span style="left:67.80px;top:59.40px;font-size:6.38px;color:#2a2a2a;">Search:</span>
<div style="left:93px;top:60.4px;width:67.6px;height:10.8px;background:#fff;box-sizing:border-box;border:0.6px solid #b4b4b4"></div>
<div style="left:162.8px;top:60.6px;width:10px;height:9.6px;background:#f6f6f6;box-sizing:border-box;border-right:1px solid #9c9c9c;border-bottom:1px solid #9c9c9c;border-top:0.5px solid #e4e4e4;border-left:0.5px solid #e4e4e4"></div>
<svg style="left:162px;top:60px;" width="11" height="11"><g transform="translate(0.800,0.600)"><path d="M1.4 3.8h7.4L5.1 8z" fill="#111"/></g></svg>
<svg style="left:175px;top:60px;" width="13" height="13"><g transform="translate(0.400,0.800)"><path d="M2.6 1.6h1.6v1h2.4v-1h1.6l1.6 2.6v2.6H6.4V5.2H4.6v1.6H1.4V4.2z" fill="#98a0aa"/><path d="M5.2 1l1-0.6" stroke="#98a0aa" stroke-width="0.6"/><path d="M0 7.8l2.4-1.8v1.2h2.6v1.4H2.4v1.2z" fill="#7884f8"/></g></svg>
<svg style="left:187px;top:60px;" width="13" height="13"><g transform="translate(0.000,0.800)"><path d="M1.6 1.6h1.6v1h2.4v-1h1.6l1.6 2.6v2.6H5.4V5.2H3.6v1.6H0.4V4.2z" fill="#98a0aa"/><path d="M10 7.8L7.600 6v1.2H5v1.400h2.600v1.200z" fill="#7884f8"/></g></svg>
<svg style="left:201px;top:60px;" width="13" height="13"><g transform="translate(0.000,0.800)"><path d="M1.800 1.200h1.600v1h2v-1H7l1 2.400v2.400H5.200V4.800H3.800v1.200H0.600V3.800z" fill="#3c4450"/><path d="M8 2l3.200 2.400L8 6.800z" fill="#b4b4b4"/><path d="M7.400 5.200l1.200 1.400-3.400 3.200-1.600-1.400z" fill="#6aa0f0"/><path d="M3.600 8.400l1.600 1.400-2 0.400z" fill="#a0c0f4"/></g></svg>
<svg style="left:225px;top:58px;" width="15" height="15"><g transform="translate(0.600,0.800)"><path d="M7.24 7.24L10.14 10.14" stroke="#1020d8" stroke-width="1.6" stroke-linecap="round"/><circle cx="5" cy="5" r="3.2" fill="#fff" stroke="#111" stroke-width="0.8"/><circle cx="5" cy="5" r="1.3" fill="#111"/></g></svg>
<svg style="left:238px;top:58px;" width="15" height="15"><g transform="translate(0.600,0.800)"><path d="M7.24 7.24L10.14 10.14" stroke="#1020d8" stroke-width="1.6" stroke-linecap="round"/><circle cx="5" cy="5" r="3.2" fill="#fff" stroke="#111" stroke-width="0.8"/><path d="M3.400 5h3.200" stroke="#111" stroke-width="1.1"/></g></svg>
<svg style="left:252px;top:58px;" width="15" height="15"><g transform="translate(0.000,0.700)"><path d="M7.38 7.38L10.28 10.28" stroke="#1020d8" stroke-width="1.6" stroke-linecap="round"/><circle cx="5" cy="5" r="3.4" fill="#0c4c8c" stroke="#0a1a2a" stroke-width="0.8"/><circle cx="4.200" cy="4.200" r="1.200" fill="#3a78b8"/></g></svg>
<svg style="left:265px;top:60px;" width="13" height="13"><g transform="translate(0.600,0.400)"><rect x="2.600" y="0.800" width="1.600" height="6.200" fill="#fcf0c0" stroke="#d89a00" stroke-width="0.700"/><rect x="0.400" y="6.600" width="6.600" height="2.600" fill="#fcf0c0" stroke="#d89a00" stroke-width="0.900"/><circle cx="6.900" cy="1.900" r="1.800" fill="#f4f4f4" stroke="#8a8a8a" stroke-width="0.600"/><path d="M8 3.200l1.400 2.200" stroke="#1020d8" stroke-width="1.100"/></g></svg>
<svg style="left:279px;top:60px;" width="13" height="13"><g transform="translate(0.000,0.400)"><rect x="1.600" y="2.800" width="1.500" height="4.200" fill="#fcf0c0" stroke="#d89a00" stroke-width="0.700"/><rect x="6.400" y="3.800" width="1.500" height="3.200" fill="#fcf0c0" stroke="#d89a00" stroke-width="0.700"/><rect x="0.400" y="6.800" width="4" height="2.400" fill="#fcf0c0" stroke="#d89a00" stroke-width="0.900"/><rect x="5.200" y="6.800" width="4" height="2.400" fill="#fcf0c0" stroke="#d89a00" stroke-width="0.900"/><circle cx="6.800" cy="1.900" r="1.700" fill="#f4f4f4" stroke="#8a8a8a" stroke-width="0.600"/><path d="M8 3.200l1.200 2" stroke="#1020d8" stroke-width="1.100"/></g></svg>
<svg style="left:291px;top:60px;" width="13" height="13"><g transform="translate(0.400,0.400)"><rect x="0.400" y="0.400" width="3.600" height="3.400" fill="#c8ccf4" stroke="#8088e0" stroke-width="0.700"/><rect x="1.800" y="2" width="3.600" height="3.400" fill="#e4e6fa" stroke="#8088e0" stroke-width="0.700"/><circle cx="6.600" cy="5.600" r="1.900" fill="#f0f0f0" stroke="#909090" stroke-width="0.600"/><path d="M8 7l2 2.200" stroke="#4050e8" stroke-width="1.100"/></g></svg>
<div style="left:315.2px;top:60px;width:11.6px;height:11.4px;background:#fdfdfd;box-sizing:border-box;border-left:0.8px solid #c0c0c0;border-top:0.8px solid #c0c0c0"></div>
<svg style="left:315px;top:60px;" width="13" height="13"><g transform="translate(0.200,0.000)"><path d="M6.300 2.400v7.600M1.800 10h9" stroke="#3fa868" stroke-width="0.800" fill="none"/></g></svg>
<div style="left:330.2px;top:60px;width:11.8px;height:11.4px;background:#ececec;box-sizing:border-box;border-right:1.2px solid #aaaaaa;border-bottom:1.2px solid #aaaaaa;border-top:0.5px solid #fafafa;border-left:0.5px solid #fafafa"></div>
<svg style="left:330px;top:60px;" width="13" height="13"><g transform="translate(0.200,0.000)"><rect x="3.800" y="1.600" width="4.800" height="8.400" fill="#1c2c7c"/><path d="M5.400 1.600v8.400M7 1.600v8.400" stroke="#2a4a6a" stroke-width="0.500"/><path d="M1.600 9.700h8.800" stroke="#58b070" stroke-width="0.700"/></g></svg>
<div style="left:346px;top:60px;width:11.8px;height:11.4px;background:#ececec;box-sizing:border-box;border-right:1.2px solid #aaaaaa;border-bottom:1.2px solid #aaaaaa;border-top:0.5px solid #fafafa;border-left:0.5px solid #fafafa"></div>
<svg style="left:346px;top:60px;" width="13" height="13"><rect x="2.200" y="1.400" width="8.400" height="9" fill="#0a5c10"/><path d="M5 1.400v9M7.800 1.400v9" stroke="#0a480c" stroke-width="0.600"/></svg>
<svg style="left:367px;top:61px;" width="13" height="13"><g transform="translate(0.800,0.400)"><rect x="0" y="0" width="9.200" height="9.200" fill="#8c8ac2"/><rect x="3.800" y="0" width="1.200" height="9.200" fill="#9ea8c4"/></g></svg>
<svg style="left:381px;top:61px;" width="13" height="13"><g transform="translate(0.000,0.200)"><path d="M0 8.500h3M5.600 0.900h3.600" stroke="#8cc8a0" stroke-width="0.900"/><rect x="2.800" y="0.400" width="1" height="8.600" fill="#e4e48c"/><rect x="3.800" y="0.400" width="1.800" height="8.600" fill="#7a7ac0"/></g></svg>
<svg style="left:394px;top:61px;" width="13" height="13"><g transform="translate(0.000,0.200)"><path d="M0 8.500h4.400V0.900h4.600" stroke="#8cc8a0" stroke-width="0.900" fill="none"/></g></svg>
<svg style="left:407px;top:61px;" width="13" height="13"><g transform="translate(0.000,0.200)"><path d="M0 8.500h4M4.600 0.900h4.600" stroke="#8cc8a0" stroke-width="0.900" fill="none"/><rect x="3.800" y="0.400" width="1.100" height="8.600" fill="#e0e080"/></g></svg>
<svg style="left:0px;top:76px" width="999" height="456"><rect x="0.000" y="0.500" width="999.000" height="455.000" fill="#f0f0f0"/></svg>
<div style="left:0px;top:77px;width:2px;height:452px;background:#f7f7f7;"></div>
<svg style="left:1px;top:77px" width="2" height="452"><rect x="0.800" y="0.000" width="1.200" height="452.000" fill="#8a8a8a"/></svg>
<svg style="left:3px;top:77px" width="188" height="440"><rect x="0.000" y="0.250" width="188.000" height="439.250" fill="#808080"/></svg>
<svg style="left:193px;top:77px" width="60" height="440"><rect x="0.000" y="0.250" width="59.300" height="439.250" fill="#808080"/></svg>
<svg style="left:190px;top:77px" width="4" height="452"><rect x="0.800" y="0.500" width="2.300" height="451.000" fill="#e9e9e9"/></svg>
<svg style="left:191px;top:77px" width="2" height="440"><rect x="0.600" y="0.500" width="0.600" height="439.000" fill="#a8a8a8"/></svg>
<svg style="left:252px;top:77px" width="2" height="452"><rect x="0.200" y="0.500" width="1.400" height="451.000" fill="#f4f4f4"/></svg>
<svg style="left:253px;top:77px" width="739" height="440"><rect x="0.500" y="0.250" width="738.000" height="439.250" fill="#000"/></svg>
<svg style="left:991px;top:77px" width="3" height="452"><rect x="0.500" y="0.500" width="1.600" height="451.000" fill="#ececec"/></svg>
<svg style="left:993px;top:77px" width="6" height="452"><rect x="0.000" y="0.250" width="6.000" height="451.250" fill="#808080"/></svg>
<svg style="left:3px;top:87px" width="250" height="4"><rect x="0.000" y="0.900" width="250.000" height="2.400" fill="#e8e8e8"/></svg>
<svg style="left:253px;top:88px" width="746" height="2"><rect x="0.000" y="0.100" width="746.000" height="1.850" fill="#d6d6d6"/></svg>
<svg style="left:7px;top:90px" width="184" height="2"><rect x="0.000" y="0.050" width="184.000" height="1.000" fill="#606060"/></svg>
<svg style="left:193px;top:90px" width="60" height="2"><rect x="0.000" y="0.050" width="59.300" height="1.000" fill="#606060"/></svg>
<svg style="left:3px;top:89px" width="4" height="403"><rect x="0.000" y="0.700" width="4.000" height="401.500" fill="#fff"/></svg>
<svg style="left:23px;top:100px" width="1" height="392"><rect x="0.200" y="0.700" width="0.800" height="390.500" fill="#9a9a9a"/></svg>
<svg style="left:7px;top:91px" width="184" height="10"><rect x="0.000" y="0.400" width="184.000" height="9.500" fill="#fff"/></svg>
<svg style="left:193px;top:91px" width="60" height="10"><rect x="0.000" y="0.400" width="59.300" height="9.500" fill="#fff"/></svg>
<span style="left:233.20px;top:77.60px;font-size:6.19px;color:#f6f6f6;">Msgs</span>
<svg style="left:7px;top:77px;" width="19" height="12"><path d="M4 0.900l2.500 2.500-2.500 2.600-2.500-2.600z" fill="#c426d8"/><rect x="7.100" y="4.900" width="3.700" height="4" fill="#16a844"/><path d="M6.600 2.800l2.300 2.300-2.300 2.300-2.300-2.300z" fill="#1ee8f4"/><path d="M4.300 4.800l3.200 3.200-3.200 3.200-3.200-3.200z" fill="#0c48f0"/><path d="M13 6.700h3l-1.500 1.900z" fill="#0a0a0a"/></svg>
<svg style="left:31px;top:92px;" width="9" height="9"><g transform="translate(0.000,0.800)"><defs><linearGradient id="cg" x1="0" y1="0" x2="0" y2="1"><stop offset="0" stop-color="#fff"/><stop offset="1" stop-color="#ccd4e4"/></linearGradient></defs><rect x="0.500" y="0.500" width="6.100" height="6.100" rx="1" fill="url(#cg)" stroke="#a4b0c8" stroke-width="0.600"/><path d="M2 3.550h3.100" stroke="#2c3444" stroke-width="0.900"/></g></svg>
<svg style="left:40px;top:91px;" width="11" height="11"><g transform="translate(0.000,0.100)"><path d="M4.7 0L9.4 4.7L4.7 9.4L0 4.7Z" fill="#1a9ee6"/><path d="M4.7 0L9.4 4.7L4.7 4.7Z" fill="#35b6f2"/><path d="M4.7 0L4.7 4.7L0 4.7Z" fill="#7fd6fb"/><path d="M4.7 9.4L9.4 4.7L4.7 4.7Z" fill="#0b72c8"/></g></svg>
<span style="left:52.00px;top:89.90px;font-size:6.38px;color:#111;">/testbench/inst_mips/Memory/instr_mem</span>
<span style="left:193.60px;top:89.90px;font-size:6.78px;color:#111;">xxxxxxxxxxxxxxx...</span>
<svg style="left:44px;top:100px" width="2" height="387"><rect x="0.600" y="0.500" width="0.700" height="386.000" fill="#b8b8b8"/></svg>
<svg style="left:0px;top:77px;" width="201" height="421"><g transform="translate(0,29.15)"><rect x="42" y="-3.1" width="5.8" height="6.2" fill="#fff" stroke="#8a8a8a" stroke-width="0.4"/><path d="M43.5 0h2.8M44.9 -1.4v2.8" stroke="#000" stroke-width="1.1"/><path d="M48 0h2.4" stroke="#c8c8c8" stroke-width="0.7"/><path d="M55.2 -4.2L59.6 0L55.2 4.2L50.8 0Z" fill="#1a9ee6"/><path d="M55.2 -4.2L59.6 0L55.2 0Z" fill="#38b4f0"/><path d="M55.2 -4.2L55.2 0L50.8 0Z" fill="#80d4fa"/><path d="M55.2 4.2L59.6 0L55.2 0Z" fill="#0b72c8"/></g><g transform="translate(0,39.17)"><rect x="42" y="-3.1" width="5.8" height="6.2" fill="#fff" stroke="#8a8a8a" stroke-width="0.4"/><path d="M43.5 0h2.8M44.9 -1.4v2.8" stroke="#000" stroke-width="1.1"/><path d="M48 0h2.4" stroke="#c8c8c8" stroke-width="0.7"/><path d="M55.2 -4.2L59.6 0L55.2 4.2L50.8 0Z" fill="#1a9ee6"/><path d="M55.2 -4.2L59.6 0L55.2 0Z" fill="#38b4f0"/><path d="M55.2 -4.2L55.2 0L50.8 0Z" fill="#80d4fa"/><path d="M55.2 4.2L59.6 0L55.2 0Z" fill="#0b72c8"/></g><g transform="translate(0,49.19)"><rect x="42" y="-3.1" width="5.8" height="6.2" fill="#fff" stroke="#8a8a8a" stroke-width="0.4"/><path d="M43.5 0h2.8M44.9 -1.4v2.8" stroke="#000" stroke-width="1.1"/><path d="M48 0h2.4" stroke="#c8c8c8" stroke-width="0.7"/><path d="M55.2 -4.2L59.6 0L55.2 4.2L50.8 0Z" fill="#1a9ee6"/><path d="M55.2 -4.2L59.6 0L55.2 0Z" fill="#38b4f0"/><path d="M55.2 -4.2L55.2 0L50.8 0Z" fill="#80d4fa"/><path d="M55.2 4.2L59.6 0L55.2 0Z" fill="#0b72c8"/></g><g transform="translate(0,59.21)"><rect x="42" y="-3.1" width="5.8" height="6.2" fill="#fff" stroke="#8a8a8a" stroke-width="0.4"/><path d="M43.5 0h2.8M44.9 -1.4v2.8" stroke="#000" stroke-width="1.1"/><path d="M48 0h2.4" stroke="#c8c8c8" stroke-width="0.7"/><path d="M55.2 -4.2L59.6 0L55.2 4.2L50.8 0Z" fill="#1a9ee6"/><path d="M55.2 -4.2L59.6 0L55.2 0Z" fill="#38b4f0"/><path d="M55.2 -4.2L55.2 0L50.8 0Z" fill="#80d4fa"/><path d="M55.2 4.2L59.6 0L55.2 0Z" fill="#0b72c8"/></g><g transform="translate(0,69.23)"><rect x="42" y="-3.1" width="5.8" height="6.2" fill="#fff" stroke="#8a8a8a" stroke-width="0.4"/><path d="M43.5 0h2.8M44.9 -1.4v2.8" stroke="#000" stroke-width="1.1"/><path d="M48 0h2.4" stroke="#c8c8c8" stroke-width="0.7"/><path d="M55.2 -4.2L59.6 0L55.2 4.2L50.8 0Z" fill="#1a9ee6"/><path d="M55.2 -4.2L59.6 0L55.2 0Z" fill="#38b4f0"/><path d="M55.2 -4.2L55.2 0L50.8 0Z" fill="#80d4fa"/><path d="M55.2 4.2L59.6 0L55.2 0Z" fill="#0b72c8"/></g><g transform="translate(0,79.25)"><rect x="42" y="-3.1" width="5.8" height="6.2" fill="#fff" stroke="#8a8a8a" stroke-width="0.4"/><path d="M43.5 0h2.8M44.9 -1.4v2.8" stroke="#000" stroke-width="1.1"/><path d="M48 0h2.4" stroke="#c8c8c8" stroke-width="0.7"/><path d="M55.2 -4.2L59.6 0L55.2 4.2L50.8 0Z" fill="#1a9ee6"/><path d="M55.2 -4.2L59.6 0L55.2 0Z" fill="#38b4f0"/><path d="M55.2 -4.2L55.2 0L50.8 0Z" fill="#80d4fa"/><path d="M55.2 4.2L59.6 0L55.2 0Z" fill="#0b72c8"/></g><g transform="translate(0,89.28)"><rect x="42" y="-3.1" width="5.8" height="6.2" fill="#fff" stroke="#8a8a8a" stroke-width="0.4"/><path d="M43.5 0h2.8M44.9 -1.4v2.8" stroke="#000" stroke-width="1.1"/><path d="M48 0h2.4" stroke="#c8c8c8" stroke-width="0.7"/><path d="M55.2 -4.2L59.6 0L55.2 4.2L50.8 0Z" fill="#1a9ee6"/><path d="M55.2 -4.2L59.6 0L55.2 0Z" fill="#38b4f0"/><path d="M55.2 -4.2L55.2 0L50.8 0Z" fill="#80d4fa"/><path d="M55.2 4.2L59.6 0L55.2 0Z" fill="#0b72c8"/></g><g transform="translate(0,99.30)"><rect x="42" y="-3.1" width="5.8" height="6.2" fill="#fff" stroke="#8a8a8a" stroke-width="0.4"/><path d="M43.5 0h2.8M44.9 -1.4v2.8" stroke="#000" stroke-width="1.1"/><path d="M48 0h2.4" stroke="#c8c8c8" stroke-width="0.7"/><path d="M55.2 -4.2L59.6 0L55.2 4.2L50.8 0Z" fill="#1a9ee6"/><path d="M55.2 -4.2L59.6 0L55.2 0Z" fill="#38b4f0"/><path d="M55.2 -4.2L55.2 0L50.8 0Z" fill="#80d4fa"/><path d="M55.2 4.2L59.6 0L55.2 0Z" fill="#0b72c8"/></g><g transform="translate(0,109.32)"><rect x="42" y="-3.1" width="5.8" height="6.2" fill="#fff" stroke="#8a8a8a" stroke-width="0.4"/><path d="M43.5 0h2.8M44.9 -1.4v2.8" stroke="#000" stroke-width="1.1"/><path d="M48 0h2.4" stroke="#c8c8c8" stroke-width="0.7"/><path d="M55.2 -4.2L59.6 0L55.2 4.2L50.8 0Z" fill="#1a9ee6"/><path d="M55.2 -4.2L59.6 0L55.2 0Z" fill="#38b4f0"/><path d="M55.2 -4.2L55.2 0L50.8 0Z" fill="#80d4fa"/><path d="M55.2 4.2L59.6 0L55.2 0Z" fill="#0b72c8"/></g><g transform="translate(0,119.34)"><rect x="42" y="-3.1" width="5.8" height="6.2" fill="#fff" stroke="#8a8a8a" stroke-width="0.4"/><path d="M43.5 0h2.8M44.9 -1.4v2.8" stroke="#000" stroke-width="1.1"/><path d="M48 0h2.4" stroke="#c8c8c8" stroke-width="0.7"/><path d="M55.2 -4.2L59.6 0L55.2 4.2L50.8 0Z" fill="#1a9ee6"/><path d="M55.2 -4.2L59.6 0L55.2 0Z" fill="#38b4f0"/><path d="M55.2 -4.2L55.2 0L50.8 0Z" fill="#80d4fa"/><path d="M55.2 4.2L59.6 0L55.2 0Z" fill="#0b72c8"/></g><g transform="translate(0,129.36)"><rect x="42" y="-3.1" width="5.8" height="6.2" fill="#fff" stroke="#8a8a8a" stroke-width="0.4"/><path d="M43.5 0h2.8M44.9 -1.4v2.8" stroke="#000" stroke-width="1.1"/><path d="M48 0h2.4" stroke="#c8c8c8" stroke-width="0.7"/><path d="M55.2 -4.2L59.6 0L55.2 4.2L50.8 0Z" fill="#1a9ee6"/><path d="M55.2 -4.2L59.6 0L55.2 0Z" fill="#38b4f0"/><path d="M55.2 -4.2L55.2 0L50.8 0Z" fill="#80d4fa"/><path d="M55.2 4.2L59.6 0L55.2 0Z" fill="#0b72c8"/></g><g transform="translate(0,139.38)"><rect x="42" y="-3.1" width="5.8" height="6.2" fill="#fff" stroke="#8a8a8a" stroke-width="0.4"/><path d="M43.5 0h2.8M44.9 -1.4v2.8" stroke="#000" stroke-width="1.1"/><path d="M48 0h2.4" stroke="#c8c8c8" stroke-width="0.7"/><path d="M55.2 -4.2L59.6 0L55.2 4.2L50.8 0Z" fill="#1a9ee6"/><path d="M55.2 -4.2L59.6 0L55.2 0Z" fill="#38b4f0"/><path d="M55.2 -4.2L55.2 0L50.8 0Z" fill="#80d4fa"/><path d="M55.2 4.2L59.6 0L55.2 0Z" fill="#0b72c8"/></g><g transform="translate(0,149.40)"><rect x="42" y="-3.1" width="5.8" height="6.2" fill="#fff" stroke="#8a8a8a" stroke-width="0.4"/><path d="M43.5 0h2.8M44.9 -1.4v2.8" stroke="#000" stroke-width="1.1"/><path d="M48 0h2.4" stroke="#c8c8c8" stroke-width="0.7"/><path d="M55.2 -4.2L59.6 0L55.2 4.2L50.8 0Z" fill="#1a9ee6"/><path d="M55.2 -4.2L59.6 0L55.2 0Z" fill="#38b4f0"/><path d="M55.2 -4.2L55.2 0L50.8 0Z" fill="#80d4fa"/><path d="M55.2 4.2L59.6 0L55.2 0Z" fill="#0b72c8"/></g><g transform="translate(0,159.42)"><rect x="42" y="-3.1" width="5.8" height="6.2" fill="#fff" stroke="#8a8a8a" stroke-width="0.4"/><path d="M43.5 0h2.8M44.9 -1.4v2.8" stroke="#000" stroke-width="1.1"/><path d="M48 0h2.4" stroke="#c8c8c8" stroke-width="0.7"/><path d="M55.2 -4.2L59.6 0L55.2 4.2L50.8 0Z" fill="#1a9ee6"/><path d="M55.2 -4.2L59.6 0L55.2 0Z" fill="#38b4f0"/><path d="M55.2 -4.2L55.2 0L50.8 0Z" fill="#80d4fa"/><path d="M55.2 4.2L59.6 0L55.2 0Z" fill="#0b72c8"/></g><g transform="translate(0,169.44)"><rect x="42" y="-3.1" width="5.8" height="6.2" fill="#fff" stroke="#8a8a8a" stroke-width="0.4"/><path d="M43.5 0h2.8M44.9 -1.4v2.8" stroke="#000" stroke-width="1.1"/><path d="M48 0h2.4" stroke="#c8c8c8" stroke-width="0.7"/><path d="M55.2 -4.2L59.6 0L55.2 4.2L50.8 0Z" fill="#1a9ee6"/><path d="M55.2 -4.2L59.6 0L55.2 0Z" fill="#38b4f0"/><path d="M55.2 -4.2L55.2 0L50.8 0Z" fill="#80d4fa"/><path d="M55.2 4.2L59.6 0L55.2 0Z" fill="#0b72c8"/></g><g transform="translate(0,179.47)"><rect x="42" y="-3.1" width="5.8" height="6.2" fill="#fff" stroke="#8a8a8a" stroke-width="0.4"/><path d="M43.5 0h2.8M44.9 -1.4v2.8" stroke="#000" stroke-width="1.1"/><path d="M48 0h2.4" stroke="#c8c8c8" stroke-width="0.7"/><path d="M55.2 -4.2L59.6 0L55.2 4.2L50.8 0Z" fill="#1a9ee6"/><path d="M55.2 -4.2L59.6 0L55.2 0Z" fill="#38b4f0"/><path d="M55.2 -4.2L55.2 0L50.8 0Z" fill="#80d4fa"/><path d="M55.2 4.2L59.6 0L55.2 0Z" fill="#0b72c8"/></g><g transform="translate(0,189.49)"><rect x="42" y="-3.1" width="5.8" height="6.2" fill="#fff" stroke="#8a8a8a" stroke-width="0.4"/><path d="M43.5 0h2.8M44.9 -1.4v2.8" stroke="#000" stroke-width="1.1"/><path d="M48 0h2.4" stroke="#c8c8c8" stroke-width="0.7"/><path d="M55.2 -4.2L59.6 0L55.2 4.2L50.8 0Z" fill="#1a9ee6"/><path d="M55.2 -4.2L59.6 0L55.2 0Z" fill="#38b4f0"/><path d="M55.2 -4.2L55.2 0L50.8 0Z" fill="#80d4fa"/><path d="M55.2 4.2L59.6 0L55.2 0Z" fill="#0b72c8"/></g><g transform="translate(0,199.51)"><rect x="42" y="-3.1" width="5.8" height="6.2" fill="#fff" stroke="#8a8a8a" stroke-width="0.4"/><path d="M43.5 0h2.8M44.9 -1.4v2.8" stroke="#000" stroke-width="1.1"/><path d="M48 0h2.4" stroke="#c8c8c8" stroke-width="0.7"/><path d="M55.2 -4.2L59.6 0L55.2 4.2L50.8 0Z" fill="#1a9ee6"/><path d="M55.2 -4.2L59.6 0L55.2 0Z" fill="#38b4f0"/><path d="M55.2 -4.2L55.2 0L50.8 0Z" fill="#80d4fa"/><path d="M55.2 4.2L59.6 0L55.2 0Z" fill="#0b72c8"/></g><g transform="translate(0,209.53)"><rect x="42" y="-3.1" width="5.8" height="6.2" fill="#fff" stroke="#8a8a8a" stroke-width="0.4"/><path d="M43.5 0h2.8M44.9 -1.4v2.8" stroke="#000" stroke-width="1.1"/><path d="M48 0h2.4" stroke="#c8c8c8" stroke-width="0.7"/><path d="M55.2 -4.2L59.6 0L55.2 4.2L50.8 0Z" fill="#1a9ee6"/><path d="M55.2 -4.2L59.6 0L55.2 0Z" fill="#38b4f0"/><path d="M55.2 -4.2L55.2 0L50.8 0Z" fill="#80d4fa"/><path d="M55.2 4.2L59.6 0L55.2 0Z" fill="#0b72c8"/></g><g transform="translate(0,219.55)"><rect x="42" y="-3.1" width="5.8" height="6.2" fill="#fff" stroke="#8a8a8a" stroke-width="0.4"/><path d="M43.5 0h2.8M44.9 -1.4v2.8" stroke="#000" stroke-width="1.1"/><path d="M48 0h2.4" stroke="#c8c8c8" stroke-width="0.7"/><path d="M55.2 -4.2L59.6 0L55.2 4.2L50.8 0Z" fill="#1a9ee6"/><path d="M55.2 -4.2L59.6 0L55.2 0Z" fill="#38b4f0"/><path d="M55.2 -4.2L55.2 0L50.8 0Z" fill="#80d4fa"/><path d="M55.2 4.2L59.6 0L55.2 0Z" fill="#0b72c8"/></g><g transform="translate(0,229.57)"><rect x="42" y="-3.1" width="5.8" height="6.2" fill="#fff" stroke="#8a8a8a" stroke-width="0.4"/><path d="M43.5 0h2.8M44.9 -1.4v2.8" stroke="#000" stroke-width="1.1"/><path d="M48 0h2.4" stroke="#c8c8c8" stroke-width="0.7"/><path d="M55.2 -4.2L59.6 0L55.2 4.2L50.8 0Z" fill="#1a9ee6"/><path d="M55.2 -4.2L59.6 0L55.2 0Z" fill="#38b4f0"/><path d="M55.2 -4.2L55.2 0L50.8 0Z" fill="#80d4fa"/><path d="M55.2 4.2L59.6 0L55.2 0Z" fill="#0b72c8"/></g><g transform="translate(0,239.59)"><rect x="42" y="-3.1" width="5.8" height="6.2" fill="#fff" stroke="#8a8a8a" stroke-width="0.4"/><path d="M43.5 0h2.8M44.9 -1.4v2.8" stroke="#000" stroke-width="1.1"/><path d="M48 0h2.4" stroke="#c8c8c8" stroke-width="0.7"/><path d="M55.2 -4.2L59.6 0L55.2 4.2L50.8 0Z" fill="#1a9ee6"/><path d="M55.2 -4.2L59.6 0L55.2 0Z" fill="#38b4f0"/><path d="M55.2 -4.2L55.2 0L50.8 0Z" fill="#80d4fa"/><path d="M55.2 4.2L59.6 0L55.2 0Z" fill="#0b72c8"/></g><g transform="translate(0,249.61)"><rect x="42" y="-3.1" width="5.8" height="6.2" fill="#fff" stroke="#8a8a8a" stroke-width="0.4"/><path d="M43.5 0h2.8M44.9 -1.4v2.8" stroke="#000" stroke-width="1.1"/><path d="M48 0h2.4" stroke="#c8c8c8" stroke-width="0.7"/><path d="M55.2 -4.2L59.6 0L55.2 4.2L50.8 0Z" fill="#1a9ee6"/><path d="M55.2 -4.2L59.6 0L55.2 0Z" fill="#38b4f0"/><path d="M55.2 -4.2L55.2 0L50.8 0Z" fill="#80d4fa"/><path d="M55.2 4.2L59.6 0L55.2 0Z" fill="#0b72c8"/></g><g transform="translate(0,259.63)"><rect x="42" y="-3.1" width="5.8" height="6.2" fill="#fff" stroke="#8a8a8a" stroke-width="0.4"/><path d="M43.5 0h2.8M44.9 -1.4v2.8" stroke="#000" stroke-width="1.1"/><path d="M48 0h2.4" stroke="#c8c8c8" stroke-width="0.7"/><path d="M55.2 -4.2L59.6 0L55.2 4.2L50.8 0Z" fill="#1a9ee6"/><path d="M55.2 -4.2L59.6 0L55.2 0Z" fill="#38b4f0"/><path d="M55.2 -4.2L55.2 0L50.8 0Z" fill="#80d4fa"/><path d="M55.2 4.2L59.6 0L55.2 0Z" fill="#0b72c8"/></g><g transform="translate(0,269.65)"><rect x="42" y="-3.1" width="5.8" height="6.2" fill="#fff" stroke="#8a8a8a" stroke-width="0.4"/><path d="M43.5 0h2.8M44.9 -1.4v2.8" stroke="#000" stroke-width="1.1"/><path d="M48 0h2.4" stroke="#c8c8c8" stroke-width="0.7"/><path d="M55.2 -4.2L59.6 0L55.2 4.2L50.8 0Z" fill="#1a9ee6"/><path d="M55.2 -4.2L59.6 0L55.2 0Z" fill="#38b4f0"/><path d="M55.2 -4.2L55.2 0L50.8 0Z" fill="#80d4fa"/><path d="M55.2 4.2L59.6 0L55.2 0Z" fill="#0b72c8"/></g><g transform="translate(0,279.68)"><rect x="42" y="-3.1" width="5.8" height="6.2" fill="#fff" stroke="#8a8a8a" stroke-width="0.4"/><path d="M43.5 0h2.8M44.9 -1.4v2.8" stroke="#000" stroke-width="1.1"/><path d="M48 0h2.4" stroke="#c8c8c8" stroke-width="0.7"/><path d="M55.2 -4.2L59.6 0L55.2 4.2L50.8 0Z" fill="#1a9ee6"/><path d="M55.2 -4.2L59.6 0L55.2 0Z" fill="#38b4f0"/><path d="M55.2 -4.2L55.2 0L50.8 0Z" fill="#80d4fa"/><path d="M55.2 4.2L59.6 0L55.2 0Z" fill="#0b72c8"/></g><g transform="translate(0,289.70)"><rect x="42" y="-3.1" width="5.8" height="6.2" fill="#fff" stroke="#8a8a8a" stroke-width="0.4"/><path d="M43.5 0h2.8M44.9 -1.4v2.8" stroke="#000" stroke-width="1.1"/><path d="M48 0h2.4" stroke="#c8c8c8" stroke-width="0.7"/><path d="M55.2 -4.2L59.6 0L55.2 4.2L50.8 0Z" fill="#1a9ee6"/><path d="M55.2 -4.2L59.6 0L55.2 0Z" fill="#38b4f0"/><path d="M55.2 -4.2L55.2 0L50.8 0Z" fill="#80d4fa"/><path d="M55.2 4.2L59.6 0L55.2 0Z" fill="#0b72c8"/></g><g transform="translate(0,299.72)"><rect x="42" y="-3.1" width="5.8" height="6.2" fill="#fff" stroke="#8a8a8a" stroke-width="0.4"/><path d="M43.5 0h2.8M44.9 -1.4v2.8" stroke="#000" stroke-width="1.1"/><path d="M48 0h2.4" stroke="#c8c8c8" stroke-width="0.7"/><path d="M55.2 -4.2L59.6 0L55.2 4.2L50.8 0Z" fill="#1a9ee6"/><path d="M55.2 -4.2L59.6 0L55.2 0Z" fill="#38b4f0"/><path d="M55.2 -4.2L55.2 0L50.8 0Z" fill="#80d4fa"/><path d="M55.2 4.2L59.6 0L55.2 0Z" fill="#0b72c8"/></g><g transform="translate(0,309.74)"><rect x="42" y="-3.1" width="5.8" height="6.2" fill="#fff" stroke="#8a8a8a" stroke-width="0.4"/><path d="M43.5 0h2.8M44.9 -1.4v2.8" stroke="#000" stroke-width="1.1"/><path d="M48 0h2.4" stroke="#c8c8c8" stroke-width="0.7"/><path d="M55.2 -4.2L59.6 0L55.2 4.2L50.8 0Z" fill="#1a9ee6"/><path d="M55.2 -4.2L59.6 0L55.2 0Z" fill="#38b4f0"/><path d="M55.2 -4.2L55.2 0L50.8 0Z" fill="#80d4fa"/><path d="M55.2 4.2L59.6 0L55.2 0Z" fill="#0b72c8"/></g><g transform="translate(0,319.76)"><rect x="42" y="-3.1" width="5.8" height="6.2" fill="#fff" stroke="#8a8a8a" stroke-width="0.4"/><path d="M43.5 0h2.8M44.9 -1.4v2.8" stroke="#000" stroke-width="1.1"/><path d="M48 0h2.4" stroke="#c8c8c8" stroke-width="0.7"/><path d="M55.2 -4.2L59.6 0L55.2 4.2L50.8 0Z" fill="#1a9ee6"/><path d="M55.2 -4.2L59.6 0L55.2 0Z" fill="#38b4f0"/><path d="M55.2 -4.2L55.2 0L50.8 0Z" fill="#80d4fa"/><path d="M55.2 4.2L59.6 0L55.2 0Z" fill="#0b72c8"/></g><g transform="translate(0,329.78)"><rect x="42" y="-3.1" width="5.8" height="6.2" fill="#fff" stroke="#8a8a8a" stroke-width="0.4"/><path d="M43.5 0h2.8M44.9 -1.4v2.8" stroke="#000" stroke-width="1.1"/><path d="M48 0h2.4" stroke="#c8c8c8" stroke-width="0.7"/><path d="M55.2 -4.2L59.6 0L55.2 4.2L50.8 0Z" fill="#1a9ee6"/><path d="M55.2 -4.2L59.6 0L55.2 0Z" fill="#38b4f0"/><path d="M55.2 -4.2L55.2 0L50.8 0Z" fill="#80d4fa"/><path d="M55.2 4.2L59.6 0L55.2 0Z" fill="#0b72c8"/></g><g transform="translate(0,339.80)"><rect x="42" y="-3.1" width="5.8" height="6.2" fill="#fff" stroke="#8a8a8a" stroke-width="0.4"/><path d="M43.5 0h2.8M44.9 -1.4v2.8" stroke="#000" stroke-width="1.1"/><path d="M48 0h2.4" stroke="#c8c8c8" stroke-width="0.7"/><path d="M55.2 -4.2L59.6 0L55.2 4.2L50.8 0Z" fill="#1a9ee6"/><path d="M55.2 -4.2L59.6 0L55.2 0Z" fill="#38b4f0"/><path d="M55.2 -4.2L55.2 0L50.8 0Z" fill="#80d4fa"/><path d="M55.2 4.2L59.6 0L55.2 0Z" fill="#0b72c8"/></g><g transform="translate(0,349.82)"><rect x="42" y="-3.1" width="5.8" height="6.2" fill="#fff" stroke="#8a8a8a" stroke-width="0.4"/><path d="M43.5 0h2.8M44.9 -1.4v2.8" stroke="#000" stroke-width="1.1"/><path d="M48 0h2.4" stroke="#c8c8c8" stroke-width="0.7"/><path d="M55.2 -4.2L59.6 0L55.2 4.2L50.8 0Z" fill="#1a9ee6"/><path d="M55.2 -4.2L59.6 0L55.2 0Z" fill="#38b4f0"/><path d="M55.2 -4.2L55.2 0L50.8 0Z" fill="#80d4fa"/><path d="M55.2 4.2L59.6 0L55.2 0Z" fill="#0b72c8"/></g><g transform="translate(0,359.84)"><rect x="42" y="-3.1" width="5.8" height="6.2" fill="#fff" stroke="#8a8a8a" stroke-width="0.4"/><path d="M43.5 0h2.8M44.9 -1.4v2.8" stroke="#000" stroke-width="1.1"/><path d="M48 0h2.4" stroke="#c8c8c8" stroke-width="0.7"/><path d="M55.2 -4.2L59.6 0L55.2 4.2L50.8 0Z" fill="#1a9ee6"/><path d="M55.2 -4.2L59.6 0L55.2 0Z" fill="#38b4f0"/><path d="M55.2 -4.2L55.2 0L50.8 0Z" fill="#80d4fa"/><path d="M55.2 4.2L59.6 0L55.2 0Z" fill="#0b72c8"/></g><g transform="translate(0,369.86)"><rect x="42" y="-3.1" width="5.8" height="6.2" fill="#fff" stroke="#8a8a8a" stroke-width="0.4"/><path d="M43.5 0h2.8M44.9 -1.4v2.8" stroke="#000" stroke-width="1.1"/><path d="M48 0h2.4" stroke="#c8c8c8" stroke-width="0.7"/><path d="M55.2 -4.2L59.6 0L55.2 4.2L50.8 0Z" fill="#1a9ee6"/><path d="M55.2 -4.2L59.6 0L55.2 0Z" fill="#38b4f0"/><path d="M55.2 -4.2L55.2 0L50.8 0Z" fill="#80d4fa"/><path d="M55.2 4.2L59.6 0L55.2 0Z" fill="#0b72c8"/></g><g transform="translate(0,379.88)"><rect x="42" y="-3.1" width="5.8" height="6.2" fill="#fff" stroke="#8a8a8a" stroke-width="0.4"/><path d="M43.5 0h2.8M44.9 -1.4v2.8" stroke="#000" stroke-width="1.1"/><path d="M48 0h2.4" stroke="#c8c8c8" stroke-width="0.7"/><path d="M55.2 -4.2L59.6 0L55.2 4.2L50.8 0Z" fill="#1a9ee6"/><path d="M55.2 -4.2L59.6 0L55.2 0Z" fill="#38b4f0"/><path d="M55.2 -4.2L55.2 0L50.8 0Z" fill="#80d4fa"/><path d="M55.2 4.2L59.6 0L55.2 0Z" fill="#0b72c8"/></g><g transform="translate(0,389.91)"><rect x="42" y="-3.1" width="5.8" height="6.2" fill="#fff" stroke="#8a8a8a" stroke-width="0.4"/><path d="M43.5 0h2.8M44.9 -1.4v2.8" stroke="#000" stroke-width="1.1"/><path d="M48 0h2.4" stroke="#c8c8c8" stroke-width="0.7"/><path d="M55.2 -4.2L59.6 0L55.2 4.2L50.8 0Z" fill="#1a9ee6"/><path d="M55.2 -4.2L59.6 0L55.2 0Z" fill="#38b4f0"/><path d="M55.2 -4.2L55.2 0L50.8 0Z" fill="#80d4fa"/><path d="M55.2 4.2L59.6 0L55.2 0Z" fill="#0b72c8"/></g><g transform="translate(0,399.93)"><rect x="42" y="-3.1" width="5.8" height="6.2" fill="#fff" stroke="#8a8a8a" stroke-width="0.4"/><path d="M43.5 0h2.8M44.9 -1.4v2.8" stroke="#000" stroke-width="1.1"/><path d="M48 0h2.4" stroke="#c8c8c8" stroke-width="0.7"/><path d="M55.2 -4.2L59.6 0L55.2 4.2L50.8 0Z" fill="#1a9ee6"/><path d="M55.2 -4.2L59.6 0L55.2 0Z" fill="#38b4f0"/><path d="M55.2 -4.2L55.2 0L50.8 0Z" fill="#80d4fa"/><path d="M55.2 4.2L59.6 0L55.2 0Z" fill="#0b72c8"/></g><g transform="translate(0,409.95)"><rect x="42" y="-3.1" width="5.8" height="6.2" fill="#fff" stroke="#8a8a8a" stroke-width="0.4"/><path d="M43.5 0h2.8M44.9 -1.4v2.8" stroke="#000" stroke-width="1.1"/><path d="M48 0h2.4" stroke="#c8c8c8" stroke-width="0.7"/><path d="M55.2 -4.2L59.6 0L55.2 4.2L50.8 0Z" fill="#1a9ee6"/><path d="M55.2 -4.2L59.6 0L55.2 0Z" fill="#38b4f0"/><path d="M55.2 -4.2L55.2 0L50.8 0Z" fill="#80d4fa"/><path d="M55.2 4.2L59.6 0L55.2 0Z" fill="#0b72c8"/></g></svg>
<span class="s" style="left:62.60px;top:100.25px;font-size:6.40px;color:#f4f4f4;">[0]</span>
<span class="s" style="left:193.60px;top:100.25px;font-size:6.78px;color:#f0f0f0;">xxxxxxxxxxxxxxx...</span>
<span class="s" style="left:62.60px;top:110.27px;font-size:6.40px;color:#f4f4f4;">[1]</span>
<span class="s" style="left:193.60px;top:110.27px;font-size:6.78px;color:#f0f0f0;">xxxxxxxxxxxxxxx...</span>
<span class="s" style="left:62.60px;top:120.29px;font-size:6.40px;color:#f4f4f4;">[2]</span>
<span class="s" style="left:193.60px;top:120.29px;font-size:6.78px;color:#f0f0f0;">xxxxxxxxxxxxxxx...</span>
<span class="s" style="left:62.60px;top:130.31px;font-size:6.40px;color:#f4f4f4;">[3]</span>
<span class="s" style="left:193.60px;top:130.31px;font-size:6.78px;color:#f0f0f0;">xxxxxxxxxxxxxxx...</span>
<span class="s" style="left:62.60px;top:140.33px;font-size:6.40px;color:#f4f4f4;">[4]</span>
<span class="s" style="left:193.60px;top:140.33px;font-size:6.78px;color:#f0f0f0;">xxxxxxxxxxxxxxx...</span>
<span class="s" style="left:62.60px;top:150.35px;font-size:6.40px;color:#f4f4f4;">[5]</span>
<span class="s" style="left:193.60px;top:150.35px;font-size:6.78px;color:#f0f0f0;">xxxxxxxxxxxxxxx...</span>
<span class="s" style="left:62.60px;top:160.38px;font-size:6.40px;color:#f4f4f4;">[6]</span>
<span class="s" style="left:193.60px;top:160.38px;font-size:6.78px;color:#f0f0f0;">xxxxxxxxxxxxxxx...</span>
<span class="s" style="left:62.60px;top:170.40px;font-size:6.40px;color:#f4f4f4;">[7]</span>
<span class="s" style="left:193.60px;top:170.40px;font-size:6.78px;color:#f0f0f0;">xxxxxxxxxxxxxxx...</span>
<span class="s" style="left:62.60px;top:180.42px;font-size:6.40px;color:#f4f4f4;">[8]</span>
<span class="s" style="left:193.60px;top:180.42px;font-size:6.78px;color:#f0f0f0;">xxxxxxxxxxxxxxx...</span>
<span class="s" style="left:62.60px;top:190.44px;font-size:6.40px;color:#f4f4f4;">[9]</span>
<span class="s" style="left:193.60px;top:190.44px;font-size:6.78px;color:#f0f0f0;">xxxxxxxxxxxxxxx...</span>
<span class="s" style="left:62.60px;top:200.46px;font-size:6.40px;color:#f4f4f4;">[10]</span>
<span class="s" style="left:193.60px;top:200.46px;font-size:6.78px;color:#f0f0f0;">xxxxxxxxxxxxxxx...</span>
<span class="s" style="left:62.60px;top:210.48px;font-size:6.40px;color:#f4f4f4;">[11]</span>
<span class="s" style="left:193.60px;top:210.48px;font-size:6.78px;color:#f0f0f0;">xxxxxxxxxxxxxxx...</span>
<span class="s" style="left:62.60px;top:220.50px;font-size:6.40px;color:#f4f4f4;">[12]</span>
<span class="s" style="left:193.60px;top:220.50px;font-size:6.78px;color:#f0f0f0;">xxxxxxxxxxxxxxx...</span>
<span class="s" style="left:62.60px;top:230.52px;font-size:6.40px;color:#f4f4f4;">[13]</span>
<span class="s" style="left:193.60px;top:230.52px;font-size:6.78px;color:#f0f0f0;">xxxxxxxxxxxxxxx...</span>
<span class="s" style="left:62.60px;top:240.54px;font-size:6.40px;color:#f4f4f4;">[14]</span>
<span class="s" style="left:193.60px;top:240.54px;font-size:6.78px;color:#f0f0f0;">xxxxxxxxxxxxxxx...</span>
<span class="s" style="left:62.60px;top:250.57px;font-size:6.40px;color:#f4f4f4;">[15]</span>
<span class="s" style="left:193.60px;top:250.57px;font-size:6.78px;color:#f0f0f0;">xxxxxxxxxxxxxxx...</span>
<span class="s" style="left:62.60px;top:260.59px;font-size:6.40px;color:#f4f4f4;">[16]</span>
<span class="s" style="left:193.60px;top:260.59px;font-size:6.78px;color:#f0f0f0;">xxxxxxxxxxxxxxx...</span>
<span class="s" style="left:62.60px;top:270.61px;font-size:6.40px;color:#f4f4f4;">[17]</span>
<span class="s" style="left:193.60px;top:270.61px;font-size:6.78px;color:#f0f0f0;">xxxxxxxxxxxxxxx...</span>
<span class="s" style="left:62.60px;top:280.63px;font-size:6.40px;color:#f4f4f4;">[18]</span>
<span class="s" style="left:193.60px;top:280.63px;font-size:6.78px;color:#f0f0f0;">xxxxxxxxxxxxxxx...</span>
<span class="s" style="left:62.60px;top:290.65px;font-size:6.40px;color:#f4f4f4;">[19]</span>
<span class="s" style="left:193.60px;top:290.65px;font-size:6.78px;color:#f0f0f0;">xxxxxxxxxxxxxxx...</span>
<span class="s" style="left:62.60px;top:300.67px;font-size:6.40px;color:#f4f4f4;">[20]</span>
<span class="s" style="left:193.60px;top:300.67px;font-size:6.78px;color:#f0f0f0;">xxxxxxxxxxxxxxx...</span>
<span class="s" style="left:62.60px;top:310.69px;font-size:6.40px;color:#f4f4f4;">[21]</span>
<span class="s" style="left:193.60px;top:310.69px;font-size:6.78px;color:#f0f0f0;">xxxxxxxxxxxxxxx...</span>
<span class="s" style="left:62.60px;top:320.71px;font-size:6.40px;color:#f4f4f4;">[22]</span>
<span class="s" style="left:193.60px;top:320.71px;font-size:6.78px;color:#f0f0f0;">xxxxxxxxxxxxxxx...</span>
<span class="s" style="left:62.60px;top:330.73px;font-size:6.40px;color:#f4f4f4;">[23]</span>
<span class="s" style="left:193.60px;top:330.73px;font-size:6.78px;color:#f0f0f0;">xxxxxxxxxxxxxxx...</span>
<span class="s" style="left:62.60px;top:340.75px;font-size:6.40px;color:#f4f4f4;">[24]</span>
<span class="s" style="left:193.60px;top:340.75px;font-size:6.78px;color:#f0f0f0;">xxxxxxxxxxxxxxx...</span>
<span class="s" style="left:62.60px;top:350.78px;font-size:6.40px;color:#f4f4f4;">[25]</span>
<span class="s" style="left:193.60px;top:350.78px;font-size:6.78px;color:#f0f0f0;">xxxxxxxxxxxxxxx...</span>
<span class="s" style="left:62.60px;top:360.80px;font-size:6.40px;color:#f4f4f4;">[26]</span>
<span class="s" style="left:193.60px;top:360.80px;font-size:6.78px;color:#f0f0f0;">xxxxxxxxxxxxxxx...</span>
<span class="s" style="left:62.60px;top:370.82px;font-size:6.40px;color:#f4f4f4;">[27]</span>
<span class="s" style="left:193.60px;top:370.82px;font-size:6.78px;color:#f0f0f0;">xxxxxxxxxxxxxxx...</span>
<span class="s" style="left:62.60px;top:380.84px;font-size:6.40px;color:#f4f4f4;">[28]</span>
<span class="s" style="left:193.60px;top:380.84px;font-size:6.78px;color:#f0f0f0;">xxxxxxxxxxxxxxx...</span>
<span class="s" style="left:62.60px;top:390.86px;font-size:6.40px;color:#f4f4f4;">[29]</span>
<span class="s" style="left:193.60px;top:390.86px;font-size:6.78px;color:#f0f0f0;">xxxxxxxxxxxxxxx...</span>
<span class="s" style="left:62.60px;top:400.88px;font-size:6.40px;color:#f4f4f4;">[30]</span>
<span class="s" style="left:193.60px;top:400.88px;font-size:6.78px;color:#f0f0f0;">xxxxxxxxxxxxxxx...</span>
<span class="s" style="left:62.60px;top:410.90px;font-size:6.40px;color:#f4f4f4;">[31]</span>
<span class="s" style="left:193.60px;top:410.90px;font-size:6.78px;color:#f0f0f0;">xxxxxxxxxxxxxxx...</span>
<span class="s" style="left:62.60px;top:420.92px;font-size:6.40px;color:#f4f4f4;">[32]</span>
<span class="s" style="left:193.60px;top:420.92px;font-size:6.78px;color:#f0f0f0;">xxxxxxxxxxxxxxx...</span>
<span class="s" style="left:62.60px;top:430.94px;font-size:6.40px;color:#f4f4f4;">[33]</span>
<span class="s" style="left:193.60px;top:430.94px;font-size:6.78px;color:#f0f0f0;">xxxxxxxxxxxxxxx...</span>
<span class="s" style="left:62.60px;top:440.96px;font-size:6.40px;color:#f4f4f4;">[34]</span>
<span class="s" style="left:193.60px;top:440.96px;font-size:6.78px;color:#f0f0f0;">xxxxxxxxxxxxxxx...</span>
<span class="s" style="left:62.60px;top:450.99px;font-size:6.40px;color:#f4f4f4;">[35]</span>
<span class="s" style="left:193.60px;top:450.99px;font-size:6.78px;color:#f0f0f0;">xxxxxxxxxxxxxxx...</span>
<span class="s" style="left:62.60px;top:461.01px;font-size:6.40px;color:#f4f4f4;">[36]</span>
<span class="s" style="left:193.60px;top:461.01px;font-size:6.78px;color:#f0f0f0;">xxxxxxxxxxxxxxx...</span>
<span class="s" style="left:62.60px;top:471.03px;font-size:6.40px;color:#f4f4f4;">[37]</span>
<span class="s" style="left:193.60px;top:471.03px;font-size:6.78px;color:#f0f0f0;">xxxxxxxxxxxxxxx...</span>
<span class="s" style="left:62.60px;top:481.05px;font-size:6.40px;color:#f4f4f4;">[38]</span>
<span class="s" style="left:193.60px;top:481.05px;font-size:6.78px;color:#f0f0f0;">xxxxxxxxxxxxxxx...</span>
<svg style="left:253px;top:90px;" width="739" height="403"><g transform="translate(0.500,0.000)"><rect x="41.55" y="0" width="1.1" height="401.4" fill="#585858"/><rect x="82.09" y="0" width="1.1" height="401.4" fill="#585858"/><rect x="122.63" y="0" width="1.1" height="401.4" fill="#585858"/><rect x="163.17" y="0" width="1.1" height="401.4" fill="#585858"/><rect x="203.71" y="0" width="1.1" height="401.4" fill="#585858"/><rect x="244.26" y="0" width="1.1" height="401.4" fill="#585858"/><rect x="284.80" y="0" width="1.1" height="401.4" fill="#585858"/><rect x="325.34" y="0" width="1.1" height="401.4" fill="#585858"/><rect x="365.88" y="0" width="1.1" height="401.4" fill="#585858"/><rect x="406.42" y="0" width="1.1" height="401.4" fill="#585858"/><rect x="446.96" y="0" width="1.1" height="401.4" fill="#585858"/><rect x="487.50" y="0" width="1.1" height="401.4" fill="#585858"/><rect x="528.04" y="0" width="1.1" height="401.4" fill="#585858"/><rect x="568.58" y="0" width="1.1" height="401.4" fill="#585858"/><rect x="609.12" y="0" width="1.1" height="401.4" fill="#585858"/><rect x="649.67" y="0" width="1.1" height="401.4" fill="#585858"/><rect x="690.21" y="0" width="1.1" height="401.4" fill="#585858"/><rect x="730.75" y="0" width="1.1" height="401.4" fill="#585858"/></g></svg>
<svg style="left:255px;top:92px" width="735" height="1"><rect x="0.300" y="0.000" width="734.500" height="1.000" fill="#5f8f5f"/></svg>
<svg style="left:255px;top:98px" width="735" height="2"><rect x="0.300" y="0.900" width="734.500" height="1.000" fill="#5f8f5f"/></svg>
<span style="left:259.40px;top:90.60px;font-size:7.03px;color:#e4e4e4;">xxxxxxxxxxxxxxxxxxxxxxxxxxxxxxxx xxxxxxxxxxxxxxxxxxxxxxxxxxxxxxxx xxxxxxxxxxxxxxxxxxxxxxxxxxxxxxxx xxxxxxxxxxxxxxxxxxxxxxxxxxxxxxxx xxxxxxxxxxxxxxxxxxxxxxxxxxxxxxxx xxxxxxxxxxxxxxxxxxxxxxxxxxxxxxxx xxxxxxxxxx...</span>
<svg style="left:255px;top:90px;" width="736" height="403"><g transform="translate(0.300,0.000)"><rect x="0" y="15.51" width="734.5" height="1.1" fill="#ae0000"/><rect x="0" y="25.53" width="734.5" height="1.1" fill="#ae0000"/><rect x="0" y="35.54" width="734.5" height="1.1" fill="#ae0000"/><rect x="0" y="45.56" width="734.5" height="1.1" fill="#ae0000"/><rect x="0" y="55.57" width="734.5" height="1.1" fill="#ae0000"/><rect x="0" y="65.59" width="734.5" height="1.1" fill="#ae0000"/><rect x="0" y="75.60" width="734.5" height="1.1" fill="#ae0000"/><rect x="0" y="85.62" width="734.5" height="1.1" fill="#ae0000"/><rect x="0" y="95.63" width="734.5" height="1.1" fill="#ae0000"/><rect x="0" y="105.65" width="734.5" height="1.1" fill="#ae0000"/><rect x="0" y="115.67" width="734.5" height="1.1" fill="#ae0000"/><rect x="0" y="125.68" width="734.5" height="1.1" fill="#ae0000"/><rect x="0" y="135.70" width="734.5" height="1.1" fill="#ae0000"/><rect x="0" y="145.71" width="734.5" height="1.1" fill="#ae0000"/><rect x="0" y="155.73" width="734.5" height="1.1" fill="#ae0000"/><rect x="0" y="165.74" width="734.5" height="1.1" fill="#ae0000"/><rect x="0" y="175.76" width="734.5" height="1.1" fill="#ae0000"/><rect x="0" y="185.77" width="734.5" height="1.1" fill="#ae0000"/><rect x="0" y="195.79" width="734.5" height="1.1" fill="#ae0000"/><rect x="0" y="205.80" width="734.5" height="1.1" fill="#ae0000"/><rect x="0" y="215.82" width="734.5" height="1.1" fill="#ae0000"/><rect x="0" y="225.84" width="734.5" height="1.1" fill="#ae0000"/><rect x="0" y="235.85" width="734.5" height="1.1" fill="#ae0000"/><rect x="0" y="245.87" width="734.5" height="1.1" fill="#ae0000"/><rect x="0" y="255.88" width="734.5" height="1.1" fill="#ae0000"/><rect x="0" y="265.90" width="734.5" height="1.1" fill="#ae0000"/><rect x="0" y="275.91" width="734.5" height="1.1" fill="#ae0000"/><rect x="0" y="285.93" width="734.5" height="1.1" fill="#ae0000"/><rect x="0" y="295.94" width="734.5" height="1.1" fill="#ae0000"/><rect x="0" y="305.96" width="734.5" height="1.1" fill="#ae0000"/><rect x="0" y="315.97" width="734.5" height="1.1" fill="#ae0000"/><rect x="0" y="325.99" width="734.5" height="1.1" fill="#ae0000"/><rect x="0" y="336.01" width="734.5" height="1.1" fill="#ae0000"/><rect x="0" y="346.02" width="734.5" height="1.1" fill="#ae0000"/><rect x="0" y="356.04" width="734.5" height="1.1" fill="#ae0000"/><rect x="0" y="366.05" width="734.5" height="1.1" fill="#ae0000"/><rect x="0" y="376.07" width="734.5" height="1.1" fill="#ae0000"/><rect x="0" y="386.08" width="734.5" height="1.1" fill="#ae0000"/><rect x="0" y="396.10" width="734.5" height="1.1" fill="#ae0000"/></g></svg>
<svg style="left:422px;top:77px" width="3" height="431"><rect x="0.400" y="0.500" width="1.900" height="430.000" fill="#ffe400"/></svg>
<svg style="left:3px;top:491px" width="996" height="2"><rect x="0.000" y="0.100" width="996.000" height="1.800" fill="#ececec"/></svg>
<svg style="left:422px;top:490px" width="3" height="4"><rect x="0.400" y="0.000" width="1.900" height="4.000" fill="#ffe400"/></svg>
<svg style="left:3px;top:492px" width="188" height="25"><rect x="0.000" y="0.600" width="188.000" height="24.000" fill="#808080"/></svg>
<svg style="left:193px;top:492px" width="60" height="25"><rect x="0.000" y="0.600" width="59.300" height="24.000" fill="#808080"/></svg>
<svg style="left:253px;top:492px" width="739" height="25"><rect x="0.500" y="0.600" width="738.000" height="24.000" fill="#000"/></svg>
<svg style="left:993px;top:492px" width="6" height="37"><rect x="0.000" y="0.600" width="6.000" height="36.000" fill="#808080"/></svg>
<svg style="left:30px;top:505px" width="161" height="11"><rect x="0.500" y="0.700" width="160.300" height="9.900" fill="#fff"/></svg>
<svg style="left:193px;top:505px" width="60" height="11"><rect x="0.000" y="0.700" width="59.300" height="9.900" fill="#fff"/></svg>
<span class="s" style="left:172.90px;top:493.90px;font-size:6.25px;color:#f2f2f2;">Now</span>
<span style="left:161.10px;top:505.70px;font-size:6.39px;color:#111;">Cursor 1</span>
<span class="s" style="left:202.40px;top:493.90px;font-size:6.32px;color:#f2f2f2;">5386350000 ps</span>
<span style="left:216.70px;top:505.70px;font-size:6.27px;color:#111;">414225 ps</span>
<svg style="left:270px;top:495px" width="2" height="2"><rect x="0.876" y="0.000" width="0.800" height="2.000" fill="#1fa01f"/></svg>
<svg style="left:287px;top:495px" width="1" height="2"><rect x="0.093" y="0.000" width="0.800" height="2.000" fill="#1fa01f"/></svg>
<svg style="left:303px;top:495px" width="2" height="2"><rect x="0.309" y="0.000" width="0.800" height="2.000" fill="#1fa01f"/></svg>
<svg style="left:319px;top:495px" width="2" height="2"><rect x="0.526" y="0.000" width="0.800" height="2.000" fill="#1fa01f"/></svg>
<svg style="left:335px;top:493px" width="2" height="5"><rect x="0.642" y="0.000" width="1.000" height="4.200" fill="#22c022"/></svg>
<svg style="left:351px;top:495px" width="2" height="2"><rect x="0.958" y="0.000" width="0.800" height="2.000" fill="#1fa01f"/></svg>
<svg style="left:368px;top:495px" width="1" height="2"><rect x="0.175" y="0.000" width="0.800" height="2.000" fill="#1fa01f"/></svg>
<svg style="left:384px;top:495px" width="2" height="2"><rect x="0.391" y="0.000" width="0.800" height="2.000" fill="#1fa01f"/></svg>
<svg style="left:400px;top:495px" width="2" height="2"><rect x="0.608" y="0.000" width="0.800" height="2.000" fill="#1fa01f"/></svg>
<svg style="left:416px;top:493px" width="2" height="5"><rect x="0.724" y="0.000" width="1.000" height="4.200" fill="#22c022"/></svg>
<svg style="left:433px;top:495px" width="1" height="2"><rect x="0.040" y="0.000" width="0.800" height="2.000" fill="#1fa01f"/></svg>
<svg style="left:449px;top:495px" width="2" height="2"><rect x="0.257" y="0.000" width="0.800" height="2.000" fill="#1fa01f"/></svg>
<svg style="left:465px;top:495px" width="2" height="2"><rect x="0.473" y="0.000" width="0.800" height="2.000" fill="#1fa01f"/></svg>
<svg style="left:481px;top:495px" width="2" height="2"><rect x="0.690" y="0.000" width="0.800" height="2.000" fill="#1fa01f"/></svg>
<svg style="left:497px;top:493px" width="2" height="5"><rect x="0.806" y="0.000" width="1.000" height="4.200" fill="#22c022"/></svg>
<svg style="left:514px;top:495px" width="1" height="2"><rect x="0.122" y="0.000" width="0.800" height="2.000" fill="#1fa01f"/></svg>
<svg style="left:530px;top:495px" width="2" height="2"><rect x="0.339" y="0.000" width="0.800" height="2.000" fill="#1fa01f"/></svg>
<svg style="left:546px;top:495px" width="2" height="2"><rect x="0.555" y="0.000" width="0.800" height="2.000" fill="#1fa01f"/></svg>
<svg style="left:562px;top:495px" width="2" height="2"><rect x="0.772" y="0.000" width="0.800" height="2.000" fill="#1fa01f"/></svg>
<svg style="left:578px;top:493px" width="2" height="5"><rect x="0.888" y="0.000" width="1.000" height="4.200" fill="#22c022"/></svg>
<svg style="left:595px;top:495px" width="2" height="2"><rect x="0.204" y="0.000" width="0.800" height="2.000" fill="#1fa01f"/></svg>
<svg style="left:611px;top:495px" width="2" height="2"><rect x="0.421" y="0.000" width="0.800" height="2.000" fill="#1fa01f"/></svg>
<svg style="left:627px;top:495px" width="2" height="2"><rect x="0.637" y="0.000" width="0.800" height="2.000" fill="#1fa01f"/></svg>
<svg style="left:643px;top:495px" width="2" height="2"><rect x="0.854" y="0.000" width="0.800" height="2.000" fill="#1fa01f"/></svg>
<svg style="left:659px;top:493px" width="2" height="5"><rect x="0.970" y="0.000" width="1.000" height="4.200" fill="#22c022"/></svg>
<svg style="left:676px;top:495px" width="2" height="2"><rect x="0.286" y="0.000" width="0.800" height="2.000" fill="#1fa01f"/></svg>
<svg style="left:692px;top:495px" width="2" height="2"><rect x="0.503" y="0.000" width="0.800" height="2.000" fill="#1fa01f"/></svg>
<svg style="left:708px;top:495px" width="2" height="2"><rect x="0.719" y="0.000" width="0.800" height="2.000" fill="#1fa01f"/></svg>
<svg style="left:724px;top:495px" width="2" height="2"><rect x="0.936" y="0.000" width="0.800" height="2.000" fill="#1fa01f"/></svg>
<svg style="left:741px;top:493px" width="2" height="5"><rect x="0.052" y="0.000" width="1.000" height="4.200" fill="#22c022"/></svg>
<svg style="left:757px;top:495px" width="2" height="2"><rect x="0.368" y="0.000" width="0.800" height="2.000" fill="#1fa01f"/></svg>
<svg style="left:773px;top:495px" width="2" height="2"><rect x="0.585" y="0.000" width="0.800" height="2.000" fill="#1fa01f"/></svg>
<svg style="left:789px;top:495px" width="2" height="2"><rect x="0.801" y="0.000" width="0.800" height="2.000" fill="#1fa01f"/></svg>
<svg style="left:806px;top:495px" width="1" height="2"><rect x="0.018" y="0.000" width="0.800" height="2.000" fill="#1fa01f"/></svg>
<svg style="left:822px;top:493px" width="2" height="5"><rect x="0.134" y="0.000" width="1.000" height="4.200" fill="#22c022"/></svg>
<svg style="left:838px;top:495px" width="2" height="2"><rect x="0.450" y="0.000" width="0.800" height="2.000" fill="#1fa01f"/></svg>
<svg style="left:854px;top:495px" width="2" height="2"><rect x="0.667" y="0.000" width="0.800" height="2.000" fill="#1fa01f"/></svg>
<svg style="left:870px;top:495px" width="2" height="2"><rect x="0.883" y="0.000" width="0.800" height="2.000" fill="#1fa01f"/></svg>
<svg style="left:887px;top:495px" width="1" height="2"><rect x="0.100" y="0.000" width="0.800" height="2.000" fill="#1fa01f"/></svg>
<svg style="left:903px;top:493px" width="2" height="5"><rect x="0.216" y="0.000" width="1.000" height="4.200" fill="#22c022"/></svg>
<svg style="left:919px;top:495px" width="2" height="2"><rect x="0.532" y="0.000" width="0.800" height="2.000" fill="#1fa01f"/></svg>
<svg style="left:935px;top:495px" width="2" height="2"><rect x="0.749" y="0.000" width="0.800" height="2.000" fill="#1fa01f"/></svg>
<svg style="left:951px;top:495px" width="2" height="2"><rect x="0.965" y="0.000" width="0.800" height="2.000" fill="#1fa01f"/></svg>
<svg style="left:968px;top:495px" width="1" height="2"><rect x="0.182" y="0.000" width="0.800" height="2.000" fill="#1fa01f"/></svg>
<svg style="left:984px;top:493px" width="2" height="5"><rect x="0.298" y="0.000" width="1.000" height="4.200" fill="#22c022"/></svg>
<div style="left:255.3px;top:496px;width:20px;height:12px;overflow:hidden"><span style="left:-5.6px;top:0.6px;font-size:6.3px;color:#2ce82c;text-shadow:0 0 0.4px currentColor">0 ps</span></div>
<span class="s" style="left:402.51px;top:496.60px;font-size:6.30px;color:#2ce82c;">400000 ps</span>
<span class="s" style="left:564.68px;top:496.60px;font-size:6.30px;color:#2ce82c;">800000 ps</span>
<span class="s" style="left:725.09px;top:496.60px;font-size:6.30px;color:#2ce82c;">1200000 ps</span>
<span class="s" style="left:887.25px;top:496.60px;font-size:6.30px;color:#2ce82c;">1600000 ps</span>
<svg style="left:255px;top:505px" width="735" height="2"><rect x="0.300" y="0.400" width="734.500" height="0.900" fill="#4a4a4a"/></svg>
<svg style="left:407px;top:506px;" width="35" height="12"><rect x="0.400" y="0.900" width="32.400" height="8.600" fill="#000" stroke="#d0b000" stroke-width="0.800"/></svg>
<span style="left:408.55px;top:505.50px;font-size:6.40px;color:#e8c800;">414225 ps</span>
<svg style="left:422px;top:492px" width="3" height="16"><rect x="0.400" y="0.600" width="1.900" height="14.500" fill="#ffe400"/></svg>
<svg style="left:0px;top:516px" width="999" height="3"><rect x="0.000" y="0.500" width="999.000" height="2.000" fill="#e2e2e2"/></svg>
<svg style="left:3px;top:518px" width="188" height="11"><rect x="0.000" y="0.400" width="188.000" height="9.800" fill="#f2f2f2"/></svg>
<svg style="left:193px;top:518px" width="60" height="11"><rect x="0.000" y="0.400" width="59.300" height="9.800" fill="#f2f2f2"/></svg>
<svg style="left:253px;top:518px" width="739" height="11"><rect x="0.500" y="0.400" width="738.000" height="9.800" fill="#c9c9c9"/></svg>
<svg style="left:993px;top:518px" width="6" height="11"><rect x="0.000" y="0.400" width="6.000" height="9.800" fill="#808080"/></svg>
<svg style="left:0px;top:528px" width="999" height="4"><rect x="0.000" y="0.200" width="999.000" height="3.000" fill="#ededed"/></svg>
<svg style="left:0px;top:528px" width="999" height="2"><rect x="0.000" y="0.600" width="999.000" height="0.800" fill="#b4b4b4"/></svg>
<svg style="left:3px;top:518px" width="188" height="10"><rect x="0.000" y="0.400" width="188.000" height="9.400" fill="#f6f6f6"/></svg>
<svg style="left:3px;top:527px" width="188" height="2"><rect x="0.000" y="0.600" width="188.000" height="1.000" fill="#a4a4a4"/></svg>
<svg style="left:2px;top:517px" width="6" height="12"><rect x="0.400" y="0.800" width="4.800" height="10.600" fill="#787878"/></svg>
<div style="left:7px;top:518.2px;width:10px;height:9.8px;background:#fdfdfd;box-sizing:border-box;border-right:0.8px solid #5c5c5c;border-bottom:0.8px solid #6c6c6c"></div>
<svg style="left:7px;top:519px;" width="10" height="10"><path d="M5.300 2.400L3.600 4.300L5.300 6.200" fill="none" stroke="#8a8a8a" stroke-width="0.800"/></svg>
<div style="left:181px;top:518.8px;width:9.6px;height:9.2px;background:#f2f2f2;box-sizing:border-box;border-right:0.9px solid #a2a2a2;border-bottom:0.9px solid #a2a2a2"></div>
<svg style="left:181px;top:519px;" width="10" height="10"><path d="M3.800 2.400L5.500 4.300L3.800 6.200" fill="none" stroke="#9a9a9a" stroke-width="0.800"/></svg>
<svg style="left:193px;top:518px" width="60" height="11"><rect x="0.000" y="0.400" width="59.300" height="9.800" fill="#f8f8f8"/></svg>
<div style="left:193.2px;top:518.8px;width:8.4px;height:9.2px;background:#f8f8f8;box-sizing:border-box;border-right:0.9px solid #a2a2a2;border-bottom:0.9px solid #a2a2a2"></div>
<svg style="left:193px;top:519px;" width="9" height="10"><g transform="translate(0.200,0.000)"><path d="M5.400 2.100v4.400L2.600 4.300z" fill="#111"/></g></svg>
<div style="left:203px;top:518.8px;width:3.8px;height:9.2px;background:#fdfdfd;box-sizing:border-box;border-left:0.7px solid #b0b0b0;border-bottom:0.9px solid #a8a8a8;border-right:0.6px solid #c8c8c8"></div>
<div style="left:243.2px;top:518.8px;width:8.6px;height:9.2px;background:#f8f8f8;box-sizing:border-box;border-right:0.9px solid #a2a2a2;border-bottom:0.9px solid #a2a2a2"></div>
<svg style="left:243px;top:519px;" width="9" height="10"><g transform="translate(0.500,0.000)"><path d="M3 2.100v4.400L5.800 4.300z" fill="#111"/></g></svg>
<div style="left:254.4px;top:518.8px;width:8px;height:9.2px;background:#f4f4f4;box-sizing:border-box;border-right:0.9px solid #a2a2a2;border-bottom:0.9px solid #a2a2a2"></div>
<svg style="left:254px;top:519px;" width="9" height="10"><g transform="translate(0.200,0.000)"><path d="M5.400 2.100v4.400L2.600 4.300z" fill="#111"/></g></svg>
<div style="left:263px;top:518.8px;width:4px;height:9px;background:#f8f8f8;border-right:0.7px solid #9a9a9a;box-sizing:border-box"></div>
<div style="left:981.5px;top:518.8px;width:9px;height:9.2px;background:#f4f4f4;box-sizing:border-box;border-right:0.9px solid #a2a2a2;border-bottom:0.9px solid #a2a2a2"></div>
<svg style="left:981px;top:519px;" width="10" height="10"><g transform="translate(0.500,0.000)"><path d="M3.400 2.100v4.400L6.200 4.300z" fill="#111"/></g></svg>
<svg style="left:993px;top:90px" width="6" height="402"><rect x="0.000" y="0.000" width="6.000" height="401.200" fill="#c9c9c9"/></svg>
<svg style="left:993px;top:91px" width="6" height="8"><rect x="0.400" y="0.200" width="5.600" height="7.400" fill="#f6f6f6"/></svg>
<svg style="left:993px;top:91px;" width="7" height="9"><g transform="translate(0.400,0.200)"><path d="M1.2 4.6h3.6L3 2.6z" fill="#111"/></g></svg>
<svg style="left:993px;top:481px" width="6" height="9"><rect x="0.400" y="0.200" width="5.600" height="8.600" fill="#f6f6f6"/></svg>
<svg style="left:993px;top:481px;" width="7" height="10"><g transform="translate(0.400,0.200)"><path d="M1.2 3.4h3.6L3 5.6z" fill="#111"/></g></svg>
<svg style="left:7px;top:496px;" width="25" height="21"><path d="M1.4 1.2h3.4l1 2.200H0.600z" fill="#c4c4c4"/><rect x="0.400" y="3" width="5.800" height="1.400" fill="#2a2a2a"/><rect x="0.600" y="4.400" width="5.600" height="1.400" fill="#3a7ad8"/><rect x="7" y="0.300" width="6.700" height="6" fill="#4a8ae0"/><rect x="7.800" y="1.400" width="5.100" height="3.200" fill="#a8c8f4"/><path d="M9 6.200h2.600l-1.300 0.900z" fill="#5a90e0"/><circle cx="17.800" cy="3.400" r="3.100" fill="#58b848"/><circle cx="17.800" cy="3.400" r="2" fill="#8cd878"/><path d="M16.900 2.200l2.200 1.200-2.200 1.200z" fill="#fff"/><path d="M3.400 14v-1.400q2-2 4 0V14" fill="none" stroke="#b0b0b0" stroke-width="0.800"/><rect x="2.100" y="13.900" width="6.700" height="4.900" fill="#e8b838"/><rect x="2.100" y="15.800" width="6.700" height="0.900" fill="#f8dc80"/><path d="M10.400 17l3.400-3.200" stroke="#4a80e0" stroke-width="1.900" stroke-linecap="round"/><path d="M13.600 13.600l1.200-1.600 1 0.300-0.300 1.300 1.300-0.300 0.200 1-1.800 1z" fill="#b8b8b8"/><circle cx="19.900" cy="14.400" r="3" fill="#e05050"/><circle cx="19.900" cy="14.400" r="2.100" fill="#f07a7a"/><path d="M18.400 14.400h3" stroke="#fff" stroke-width="1.100"/></svg>
</div></body></html>
